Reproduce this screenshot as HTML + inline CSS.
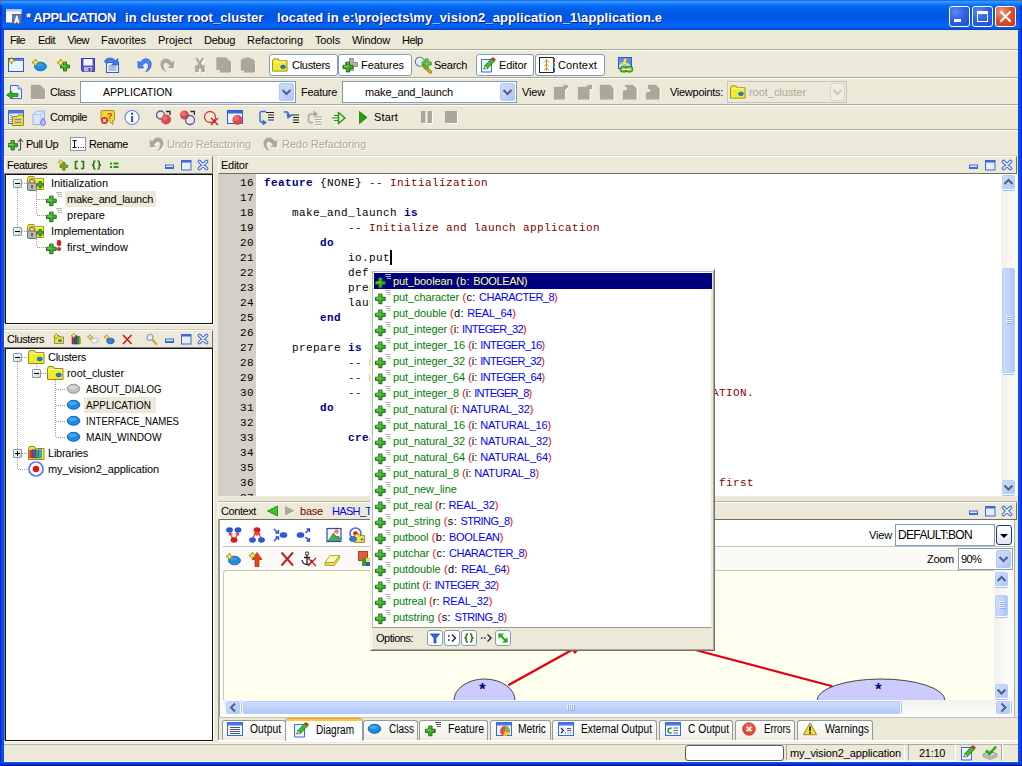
<!DOCTYPE html>
<html><head><meta charset="utf-8"><title>APPLICATION</title>
<style>
html,body{margin:0;padding:0}
body{width:1022px;height:766px;position:relative;overflow:hidden;background:#ece9d8;font-family:"Liberation Sans",sans-serif;font-size:11px;line-height:13px;color:#000}
div,span.t,svg.i{position:absolute;box-sizing:border-box}
span.t{white-space:pre}
.g{color:#aca899}
.mono{font-family:"Liberation Mono",monospace;font-size:11px;letter-spacing:0.4px;line-height:15px;white-space:pre;position:absolute}
.kw{color:#00007f;font-weight:bold}
.cm{color:#7f0000}
.hl{background:#aca899}
.hw{background:#fff}
.btn{border:1px solid #7f9db9;border-radius:3px;background:#fff}
.combo{border:1px solid #7f9db9;background:#fff}
.arrow{border:1px solid #b4c8f6;border-radius:2px;background:linear-gradient(135deg,#cbdafc 0%,#c2d3fc 50%,#adc3f8 100%)}
.tree{border:1px solid #101010;background:#fff;box-shadow:-1px -1px 0 #808080,1px 1px 0 #fff}
.sel{background:#ece9d8}
.tab{border:1px solid #919b9c;border-bottom:none;border-radius:3px 3px 0 0;background:linear-gradient(#fff,#f6f5f0 60%,#eeece2)}
.sb{background:#f3f1ec}
</style></head>
<body>
<div style="left:0px;top:0px;width:1022px;height:8px;background:#4b6dc5"></div>
<div style="left:0px;top:0px;width:1022px;height:30px;background:linear-gradient(to bottom,#0a5fe0 0%,#3a94ff 5%,#2a8cff 9%,#0f78fb 14%,#0468f2 22%,#035ee8 32%,#0259e4 45%,#0257e6 58%,#035cf0 70%,#0464f8 80%,#0566fb 86%,#0360ee 92%,#024fd0 97%,#0140b0 100%);border-radius:6px 6px 0 0"></div>
<div style="left:0px;top:30px;width:4px;height:736px;background:linear-gradient(to right,#0019cf 0,#0a35e0 25%,#0c50ee 50%,#0855e8 75%,#0349d8 100%)"></div>
<div style="left:1018px;top:30px;width:4px;height:736px;background:linear-gradient(to right,#0349d8 0,#0855e8 25%,#0c50ee 50%,#0a35e0 75%,#0019cf 100%)"></div>
<div style="left:0px;top:762px;width:1022px;height:4px;background:linear-gradient(to bottom,#0a5ae8 0,#0a48e0 30%,#0830c8 60%,#001ea0 85%,#00138c 100%)"></div>
<div style="left:0px;top:5px;width:3px;height:25px;background:linear-gradient(to right,#0a25c0,rgba(10,50,210,0))"></div>
<div style="left:1019px;top:5px;width:3px;height:25px;background:linear-gradient(to left,#0a25c0,rgba(10,50,210,0))"></div>
<svg class="i" style="left:6px;top:9px;" width="16" height="16" viewBox="0 0 16 16"><rect x="0" y="0" width="15.500" height="13.500" fill="#fdfdff"/><rect x="0" y="0" width="15.500" height="2.500" fill="#b8c4f6"/><rect x="6.700" y="5.600" width="8.800" height="9" fill="#4a7ae8" stroke="#6a5a3a" stroke-width="1"/><path d="M8 14.200L10.300 6.500H11.300L13.300 14.200L11.800 14.200L10.800 12L9.500 14.200Z" fill="#fff"/></svg>
<span class="t" style="left:26px;top:9.5px;font-size:13px;line-height:15px;color:#fff;font-weight:bold;letter-spacing:-0.411px;text-shadow:1px 1px 0 #0a1883;">* APPLICATION</span>
<span class="t" style="left:125px;top:9.5px;font-size:13px;line-height:15px;color:#fff;font-weight:bold;letter-spacing:0.086px;text-shadow:1px 1px 0 #0a1883;">in cluster root_cluster</span>
<span class="t" style="left:277px;top:9.5px;font-size:13px;line-height:15px;color:#fff;font-weight:bold;letter-spacing:0.118px;text-shadow:1px 1px 0 #0a1883;">located in e:\projects\my_vision2_application_1\application.e</span>
<div style="left:949px;top:6px;width:21px;height:21px;border:1px solid #fff;border-radius:3px;background:radial-gradient(circle at 30% 25%,#5f8df0 0,#2f62e4 45%,#1f4fd2 100%)"><div style="left:4px;top:12px;width:7px;height:3px;background:#fff"></div></div>
<div style="left:972px;top:6px;width:21px;height:21px;border:1px solid #fff;border-radius:3px;background:radial-gradient(circle at 30% 25%,#5f8df0 0,#2f62e4 45%,#1f4fd2 100%)"><div style="left:4px;top:4px;width:11px;height:11px;border:1px solid #fff;border-top:3px solid #fff"></div></div>
<div style="left:995px;top:6px;width:21px;height:21px;border:1px solid #fff;border-radius:3px;background:radial-gradient(circle at 30% 25%,#f0a080 0,#e0502c 45%,#c83818 100%)"><svg class="i" style="left:0;top:0" width="19" height="19" viewBox="0 0 19 19"><path d="M5 5l9 9M14 5l-9 9" stroke="#fff" stroke-width="2.2" stroke-linecap="round"/></svg></div>
<span class="t" style="left:10px;top:34px;letter-spacing:-0.681px;">File</span>
<span class="t" style="left:38px;top:34px;letter-spacing:-0.489px;">Edit</span>
<span class="t" style="left:67.5px;top:34px;letter-spacing:-0.536px;">View</span>
<span class="t" style="left:101px;top:34px;letter-spacing:-0.026px;">Favorites</span>
<span class="t" style="left:158px;top:34px;letter-spacing:-0.033px;">Project</span>
<span class="t" style="left:204px;top:34px;letter-spacing:-0.283px;">Debug</span>
<span class="t" style="left:247px;top:34px;letter-spacing:-0.023px;">Refactoring</span>
<span class="t" style="left:315px;top:34px;letter-spacing:-0.136px;">Tools</span>
<span class="t" style="left:352px;top:34px;letter-spacing:-0.187px;">Window</span>
<span class="t" style="left:402px;top:34px;letter-spacing:-0.530px;">Help</span>
<div class="hl" style="left:4px;top:49px;width:1014px;height:1px;"></div>
<div class="hw" style="left:4px;top:50px;width:1014px;height:1px;"></div>
<div class="hl" style="left:4px;top:77px;width:1014px;height:1px;"></div>
<div class="hw" style="left:4px;top:78px;width:1014px;height:1px;"></div>
<div class="hl" style="left:4px;top:104px;width:1014px;height:1px;"></div>
<div class="hw" style="left:4px;top:105px;width:1014px;height:1px;"></div>
<div class="hl" style="left:4px;top:129px;width:1014px;height:1px;"></div>
<div class="hw" style="left:4px;top:130px;width:1014px;height:1px;"></div>
<div style="left:4px;top:155px;width:1014px;height:1px;background:#dcd9c9"></div>
<svg class="i" style="left:8px;top:57px;" width="16" height="16" viewBox="0 0 16 16"><rect x="0.5" y="1.5" width="15" height="13" fill="#eef1ff" stroke="#2a5bd8"/><rect x="1" y="2" width="14" height="2" fill="#5b84e8"/><path transform="translate(0 0) scale(1.17)" d="M3 0L4 2L6 3L4 4L3 6L2 4L0 3L2 2Z" fill="#fff05a" stroke="#8a7a10" stroke-width="0.7"/></svg>
<svg class="i" style="left:32px;top:57px;" width="16" height="16" viewBox="0 0 16 16"><ellipse cx="8.500" cy="9.500" rx="6" ry="4.300" fill="#1c8be0" stroke="#0b5fae" stroke-width="0.8"/><ellipse cx="7.500" cy="8" rx="3.500" ry="1.600" fill="#4aa6ee" opacity="0.7"/><path transform="translate(0 2) scale(1.17)" d="M3 0L4 2L6 3L4 4L3 6L2 4L0 3L2 2Z" fill="#fff05a" stroke="#8a7a10" stroke-width="0.7"/></svg>
<svg class="i" style="left:56px;top:57px;" width="16" height="16" viewBox="0 0 16 16"><path transform="translate(4.5 5) scale(1)" d="M3 0H6V3H9V6H6V9H3V6H0V3H3Z" fill="#3fae2a" stroke="#1d6b12" stroke-width="0.9" stroke-linejoin="round"/><path transform="translate(4.5 5) scale(1)" d="M3.800 0.800H5.200M0.800 3.800H5" stroke="#8fe070" stroke-width="0.8" fill="none"/><path transform="translate(1 2) scale(1.17)" d="M3 0L4 2L6 3L4 4L3 6L2 4L0 3L2 2Z" fill="#fff05a" stroke="#8a7a10" stroke-width="0.7"/></svg>
<svg class="i" style="left:80px;top:57px;" width="16" height="16" viewBox="0 0 16 16"><path d="M1.500 1.500H14.500V14.500H2.500L1.500 13.500Z" fill="#5a55d8" stroke="#3a35b0"/><rect x="3.500" y="2" width="9" height="6.500" fill="#f4f4ff"/><rect x="4" y="10" width="8" height="4.500" fill="#b8b8c8"/><rect x="8.500" y="11" width="2" height="3" fill="#4a45c0"/></svg>
<svg class="i" style="left:104px;top:57px;" width="16" height="16" viewBox="0 0 16 16"><rect x="2.500" y="5.500" width="12" height="10" fill="#f4f6ff" stroke="#2a5bd8"/><path d="M4.500 9H12.500M4.500 11H12.500M4.500 13H12.500" stroke="#7080a8" stroke-width="1"/><path d="M0.500 5C1 0.500 8 -0.500 11.500 3.500L14 1.500L14 8L7.500 8L9.500 6C7 3.500 4 4 3.500 6.500Z" fill="#3f7ae6" stroke="#2a5bd8" stroke-width="0.6"/></svg>
<svg class="i" style="left:136px;top:57px;" width="16" height="16" viewBox="0 0 16 16"><path d="M1.900 4.400L2.300 11.100L7.700 10.700L6 8.800C7.500 6.500 9.500 5.200 11 5.800C12.500 6.400 12.800 8.500 12.200 10.500C11.800 12 11 13.200 9.800 14.600C12.500 13.800 14.500 11.800 15.100 8.500C15.600 5 14 2.300 11 1.900C8.500 1.600 6 2.800 4.400 5.600Z" fill="#4a86f0" stroke="#2a5bd8" stroke-width="0.8" stroke-linejoin="round"/></svg>
<svg class="i" style="left:160px;top:57px;" width="16" height="16" viewBox="0 0 16 16"><g transform="translate(1 1)" fill="#fff" stroke="#fff"><path transform="translate(16 0) scale(-1 1)" d="M1.900 4.400L2.300 11.100L7.700 10.700L6 8.800C7.500 6.500 9.500 5.200 11 5.800C12.500 6.400 12.800 8.500 12.200 10.500C11.800 12 11 13.200 9.800 14.600C12.500 13.800 14.500 11.800 15.100 8.500C15.600 5 14 2.300 11 1.900C8.500 1.600 6 2.800 4.400 5.600Z" stroke-width="0.6"/></g><g fill="#aca899" stroke="#aca899"><path transform="translate(16 0) scale(-1 1)" d="M1.900 4.400L2.300 11.100L7.700 10.700L6 8.800C7.500 6.500 9.500 5.200 11 5.800C12.500 6.400 12.800 8.500 12.200 10.500C11.800 12 11 13.200 9.800 14.600C12.500 13.800 14.500 11.800 15.100 8.500C15.600 5 14 2.300 11 1.900C8.500 1.600 6 2.800 4.400 5.600Z" stroke-width="0.6"/></g></svg>
<svg class="i" style="left:192px;top:57px;" width="16" height="16" viewBox="0 0 16 16"><g transform="translate(1 1)" fill="#fff" stroke="#fff"><path d="M3.500 1L5.500 1L7.800 4.500L10 1L12 1L9 6.500L10.500 8.500L12.800 8.500V15H9.300V11.500H6.800V15H3.200V8.500L5.500 8.500L6.500 6.500Z" stroke-width="0.3"/></g><g fill="#aca899" stroke="#aca899"><path d="M3.500 1L5.500 1L7.800 4.500L10 1L12 1L9 6.500L10.500 8.500L12.800 8.500V15H9.300V11.500H6.800V15H3.200V8.500L5.500 8.500L6.500 6.500Z" stroke-width="0.3"/></g></svg>
<svg class="i" style="left:216px;top:57px;" width="16" height="16" viewBox="0 0 16 16"><g transform="translate(1 1)" fill="#fff" stroke="#fff"><path d="M0.500 0.500H10L15 5V15.500H4V13H0.500Z" stroke-width="0.3"/></g><g fill="#aca899" stroke="#aca899"><path d="M0.500 0.500H10L15 5V15.500H4V13H0.500Z" stroke-width="0.3"/></g></svg>
<svg class="i" style="left:240px;top:57px;" width="16" height="16" viewBox="0 0 16 16"><g transform="translate(1 1)" fill="#fff" stroke="#fff"><path d="M1 4C1 2 3 1.500 5 1.500C5.500 0 9.500 0 10 1.500C12.500 1.500 15 3 15 6V15.500H4V13.500H1Z" stroke-width="0.3"/></g><g fill="#aca899" stroke="#aca899"><path d="M1 4C1 2 3 1.500 5 1.500C5.500 0 9.500 0 10 1.500C12.500 1.500 15 3 15 6V15.500H4V13.500H1Z" stroke-width="0.3"/></g></svg>
<div class="btn" style="left:269px;top:54px;width:69px;height:22px;"></div>
<svg class="i" style="left:272px;top:57px;" width="16" height="16" viewBox="0 0 17 16"><path d="M0.500 3.500L1.500 1.500H6.500L7.500 3.500H16V14.500H0.500Z" fill="#f2ea30" stroke="#9a8c10" stroke-width="1"/><path d="M1.500 4.500H15" stroke="#fffaa0" stroke-width="1"/><ellipse cx="11.700" cy="10" rx="2.600" ry="1.900" fill="#1c7fe0" stroke="#0b4fae" stroke-width="0.6"/></svg>
<span class="t" style="left:292px;top:59px;letter-spacing:-0.293px;">Clusters</span>
<div class="btn" style="left:338px;top:54px;width:74px;height:22px;"></div>
<svg class="i" style="left:342px;top:57px;" width="16" height="16" viewBox="0 0 16 16"><path d="M6 1.500H10V5.500H14V9.500H10V13.500H6V9.500H2V5.500H6Z" transform="translate(1.5 0)" fill="#b0b0b0" stroke="#808080" stroke-width="0.8"/><path transform="translate(1 5) scale(1.1)" d="M3 0H6V3H9V6H6V9H3V6H0V3H3Z" fill="#3fae2a" stroke="#1d6b12" stroke-width="0.9" stroke-linejoin="round"/><path transform="translate(1 5) scale(1.1)" d="M3.800 0.800H5.200M0.800 3.800H5" stroke="#8fe070" stroke-width="0.8" fill="none"/></svg>
<span class="t" style="left:361px;top:59px;letter-spacing:-0.051px;">Features</span>
<svg class="i" style="left:414px;top:56px;" width="18" height="18" viewBox="0 0 18 18"><path d="M10 10.500L16.500 16" stroke="#8a7a08" stroke-width="3.200" stroke-linecap="round"/><path d="M10 10.500L16.500 16" stroke="#d0c030" stroke-width="1.600" stroke-linecap="round"/><circle cx="5.800" cy="5.800" r="4.500" fill="#dcecff" stroke="#707880" stroke-width="1.100"/><path d="M3 5A3 3 0 0 1 6 2.500" fill="none" stroke="#fff" stroke-width="1"/><path transform="translate(8.200 3)" d="M3 0H6V3H9V6H6V9H3V6H0V3H3Z" fill="#6cc840" stroke="#3a8a20" stroke-width="0.9" stroke-linejoin="round"/></svg>
<span class="t" style="left:434px;top:59px;letter-spacing:-0.309px;">Search</span>
<div class="btn" style="left:476px;top:54px;width:58px;height:22px;"></div>
<svg class="i" style="left:480px;top:57px;" width="16" height="16" viewBox="0 0 16 16"><path d="M1.500 2.500H11.500V15H1.500Z" fill="#f0f4ff" stroke="#3a6ad8"/><path d="M3 11.500H8" stroke="#3a6ad8" stroke-width="1"/><path d="M5 12L4.500 9L11.500 1.500L14.500 4L7.500 11.500Z" fill="#3fba30" stroke="#1a7a14" stroke-width="0.8"/><path d="M11.500 1.500L13 0.500L15.500 2.500L14.500 4Z" fill="#e83a20" stroke="#a01a10" stroke-width="0.6"/><path d="M5 12L4.500 9L7.500 11.500Z" fill="#f0d890"/></svg>
<span class="t" style="left:499px;top:59px;letter-spacing:-0.122px;">Editor</span>
<div class="btn" style="left:535px;top:54px;width:70px;height:22px;"></div>
<svg class="i" style="left:539px;top:57px;" width="16" height="16" viewBox="0 0 16 16"><rect x="0.500" y="0.500" width="14" height="15" fill="#fff" stroke="#222"/><path d="M7.500 2V14M5 5.500L7.500 3L10 5.500M5 9.500L7.500 7L10 9.500M5 13L7.500 11L10 13" stroke="#b89a20" stroke-width="1" fill="none"/><rect x="14" y="1" width="2" height="4" fill="#e02020"/><rect x="14" y="6" width="2" height="4" fill="#20a020"/><rect x="14" y="11" width="2" height="4" fill="#2040e0"/></svg>
<span class="t" style="left:558px;top:59px;letter-spacing:0.156px;">Context</span>
<svg class="i" style="left:617px;top:57px;" width="16" height="16" viewBox="0 0 16 16"><rect x="1.500" y="0.500" width="13" height="11" fill="#5a90e8" stroke="#2a5bd8"/><path d="M2 8L5 5L8 8L11 6L14 9V11H2Z" fill="#c8dcff"/><path d="M7.500 1.500L5 7H7.500L6 11.500L11 5.500H8.500L10 1.500Z" fill="#fff05a" stroke="#a89010" stroke-width="0.5"/><rect x="3" y="9.500" width="7.500" height="5.500" rx="2.700" fill="#7ac83a" stroke="#2a7a14"/><rect x="8.500" y="9.500" width="7.500" height="5.500" rx="2.700" fill="#7ac83a" stroke="#2a7a14"/><rect x="5.500" y="11.700" width="8" height="1.200" fill="#f4fff0"/></svg>
<svg class="i" style="left:6px;top:84px;" width="16" height="16" viewBox="0 0 16 16"><path d="M4.500 1.500H12L15.500 5V14.500H4.500Z" fill="#eef2ff" stroke="#3a6ad8"/><path d="M12 1.500V5H15.500" fill="#c8d8ff" stroke="#3a6ad8" stroke-width="0.8"/><path d="M0.500 11L6 7.500V9.500H12V12.500H6V14.500Z" fill="#2fb020" stroke="#1a7a14" stroke-width="0.8"/></svg>
<svg class="i" style="left:30px;top:84px;" width="16" height="16" viewBox="0 0 16 16"><g transform="translate(1 1)" fill="#fff" stroke="#fff"><path d="M1 1H10L15 5.500V15H1Z" stroke-width="0.3"/></g><g fill="#aca899" stroke="#aca899"><path d="M1 1H10L15 5.500V15H1Z" stroke-width="0.3"/></g></svg>
<span class="t" style="left:50px;top:86px;letter-spacing:-0.501px;">Class</span>
<div class="combo" style="left:80px;top:81px;width:216px;height:22px;"></div>
<span class="t" style="left:103px;top:86px;transform:scaleX(0.9593);transform-origin:0 0;">APPLICATION</span>
<div class="arrow" style="left:279px;top:83px;width:15px;height:18px;"></div>
<svg class="i" style="left:278px;top:84px;" width="16" height="16" viewBox="0 0 16 16"><path d="M4.500 6L8.500 10L12.500 6" fill="none" stroke="#4d6185" stroke-width="2"/></svg>
<span class="t" style="left:301px;top:86px;letter-spacing:-0.272px;">Feature</span>
<div class="combo" style="left:342px;top:81px;width:175px;height:22px;"></div>
<span class="t" style="left:365px;top:86px;letter-spacing:-0.126px;">make_and_launch</span>
<div class="arrow" style="left:500px;top:83px;width:15px;height:18px;"></div>
<svg class="i" style="left:499px;top:84px;" width="16" height="16" viewBox="0 0 16 16"><path d="M4.500 6L8.500 10L12.500 6" fill="none" stroke="#4d6185" stroke-width="2"/></svg>
<span class="t" style="left:522px;top:86px;letter-spacing:-0.161px;">View</span>
<svg class="i" style="left:553px;top:84px;" width="16" height="16" viewBox="0 0 16 16"><g transform="translate(1 1)" fill="#fff" stroke="#fff"><path d="M1 3H9L13 0.500L15.500 2.500L12 6V15.500H1Z" stroke-width="0.3"/></g><g fill="#aca899" stroke="#aca899"><path d="M1 3H9L13 0.500L15.500 2.500L12 6V15.500H1Z" stroke-width="0.3"/></g></svg>
<svg class="i" style="left:577px;top:84px;" width="16" height="16" viewBox="0 0 16 16"><g transform="translate(1 1)" fill="#fff" stroke="#fff"><path d="M1 3H9L11 1H15V5H12.500V15.500H1Z" stroke-width="0.3"/></g><g fill="#aca899" stroke="#aca899"><path d="M1 3H9L11 1H15V5H12.500V15.500H1Z" stroke-width="0.3"/></g></svg>
<svg class="i" style="left:599px;top:84px;" width="16" height="16" viewBox="0 0 16 16"><g transform="translate(1 1)" fill="#fff" stroke="#fff"><path d="M1 1H11L14.500 4.500V15.500H1Z" stroke-width="0.3"/></g><g fill="#aca899" stroke="#aca899"><path d="M1 1H11L14.500 4.500V15.500H1Z" stroke-width="0.3"/></g></svg>
<svg class="i" style="left:622px;top:84px;" width="16" height="16" viewBox="0 0 16 16"><g transform="translate(1 1)" fill="#fff" stroke="#fff"><path d="M3 1H11L14.500 4.500V15.500H1V7L3 6Z" stroke-width="0.3"/><rect x="2" y="3" width="3" height="3" fill="#ece9d8" stroke="none"/></g><g fill="#aca899" stroke="#aca899"><path d="M3 1H11L14.500 4.500V15.500H1V7L3 6Z" stroke-width="0.3"/><rect x="2" y="3" width="3" height="3" fill="#ece9d8" stroke="none"/></g></svg>
<svg class="i" style="left:645px;top:84px;" width="16" height="16" viewBox="0 0 16 16"><g transform="translate(1 1)" fill="#fff" stroke="#fff"><path d="M3 1H11L14.500 4.500V15.500H1V9L3 8Z" stroke-width="0.3"/><rect x="2" y="5" width="3" height="3" fill="#ece9d8" stroke="none"/></g><g fill="#aca899" stroke="#aca899"><path d="M3 1H11L14.500 4.500V15.500H1V9L3 8Z" stroke-width="0.3"/><rect x="2" y="5" width="3" height="3" fill="#ece9d8" stroke="none"/></g></svg>
<span class="t" style="left:670px;top:86px;letter-spacing:-0.277px;">Viewpoints:</span>
<div style="left:727px;top:81px;width:120px;height:22px;border:1px solid #c9c7ba;background:#ece9d8"></div>
<svg class="i" style="left:730px;top:84px;" width="16" height="16" viewBox="0 0 17 16"><path d="M0.500 3.500L1.500 1.500H6.500L7.500 3.500H16V14.500H0.500Z" fill="#f2ea30" stroke="#9a8c10" stroke-width="1"/><path d="M1.500 4.500H15" stroke="#fffaa0" stroke-width="1"/><ellipse cx="11.700" cy="10" rx="2.600" ry="1.900" fill="#1c7fe0" stroke="#0b4fae" stroke-width="0.6"/></svg>
<span class="t" style="left:749px;top:86px;color:#aca899;letter-spacing:-0.039px;">root_cluster</span>
<div style="left:830px;top:83px;width:15px;height:18px;border:1px solid #d8d5c6;border-radius:2px;background:#efeee5"></div>
<svg class="i" style="left:829px;top:84px;" width="16" height="16" viewBox="0 0 16 16"><path d="M4.500 6L8.500 10L12.500 6" fill="none" stroke="#c9c7ba" stroke-width="2"/></svg>
<svg class="i" style="left:8px;top:110px;" width="16" height="16" viewBox="0 0 16 16"><rect x="0.500" y="0.500" width="15" height="13" fill="#e8eeff" stroke="#3a6ad8"/><rect x="1" y="1" width="14" height="2.500" fill="#4a78e0"/><path d="M2.500 5.500H3.500M2.500 7.500H3.500M2.500 9.500H3.500M2.500 11.500H3.500" stroke="#556" stroke-width="1"/><path d="M4.500 15.500V6.500H9L10 5H14L15.500 7V15.500Z" fill="#efe04a" stroke="#9a8a10"/><path d="M6.500 9.500H13.500M6.500 12.500H13.500" stroke="#7a8ab8" stroke-width="1.400"/></svg>
<svg class="i" style="left:32px;top:110px;" width="16" height="16" viewBox="0 0 16 16"><path d="M1 4.500L5 1H12.500V10L9 14.500H1Z" fill="#d8e6ff" stroke="#8ab0f0" stroke-width="0.9"/><path d="M1 4.500H9V14.500M9 4.500L12.500 1" fill="none" stroke="#a8c4f8" stroke-width="0.9"/><path d="M11 8C9 11 8.500 12 8.500 13A2.500 2.500 0 0 0 13.500 13C13.500 12 13 11 11 8Z" fill="#b8b8ff" stroke="#6a6ae0" stroke-width="0.8"/></svg>
<span class="t" style="left:50px;top:111px;letter-spacing:-0.478px;">Compile</span>
<svg class="i" style="left:100px;top:110px;" width="16" height="16" viewBox="0 0 16 16"><path d="M2.500 0.500H13A1.500 1.500 0 0 1 14.500 2V9A1.500 1.500 0 0 1 13 10.500H12.500L13 14.500L8.500 10.500H2.500A1.500 1.500 0 0 1 1 9V2A1.500 1.500 0 0 1 2.500 0.500Z" fill="#f4d83a" stroke="#a08a10" stroke-width="0.9"/><text x="7" y="9" font-family="Liberation Sans,sans-serif" font-weight="bold" font-size="9" fill="#d03020">?</text><circle cx="4.500" cy="10.500" r="3.200" fill="#e83828" stroke="#a01a10" stroke-width="0.6"/><path d="M3.200 9.200L5.800 11.800M5.800 9.200L3.200 11.800" stroke="#fff" stroke-width="1.200"/></svg>
<svg class="i" style="left:124px;top:110px;" width="16" height="16" viewBox="0 0 16 16"><circle cx="8" cy="7.500" r="7" fill="#fff" stroke="#6a8ad8" stroke-width="1.200"/><rect x="7" y="6" width="2.200" height="6" fill="#2a5bd8"/><circle cx="8.100" cy="3.800" r="1.300" fill="#2a5bd8"/></svg>
<svg class="i" style="left:155px;top:110px;" width="16" height="16" viewBox="0 0 16 16"><circle cx="5.5" cy="5" r="4" fill="none" stroke="#5a5aa8" stroke-width="1.300"/><circle cx="11" cy="9.5" r="5" fill="#d84a50"/><circle cx="9.75" cy="8.0" r="2.5" fill="#e87a80" opacity="0.8"/><path d="M11 1.500H15V5" fill="none" stroke="#223" stroke-width="1.300"/></svg>
<svg class="i" style="left:179px;top:110px;" width="16" height="16" viewBox="0 0 16 16"><circle cx="5.5" cy="5" r="4.5" fill="#d84a50"/><circle cx="4.375" cy="3.6500000000000004" r="2.25" fill="#e87a80" opacity="0.8"/><circle cx="11" cy="10" r="4.5" fill="none" stroke="#5a5aa8" stroke-width="1.300"/><path d="M11.500 1.500H15.500V5" fill="none" stroke="#223" stroke-width="1.300"/></svg>
<svg class="i" style="left:203px;top:110px;" width="16" height="16" viewBox="0 0 16 16"><circle cx="7" cy="7" r="5.500" fill="none" stroke="#d03a40" stroke-width="1.300"/><path d="M8 8L15 15M15 8L8 15" stroke="#c02028" stroke-width="1.400"/></svg>
<svg class="i" style="left:227px;top:110px;" width="16" height="16" viewBox="0 0 16 16"><rect x="0.500" y="0.500" width="15" height="13" fill="#eef1ff" stroke="#2a5bd8"/><rect x="1" y="1" width="14" height="2.500" fill="#3a6ad8"/><circle cx="10.5" cy="10" r="5" fill="#d84a50"/><circle cx="9.25" cy="8.5" r="2.5" fill="#e87a80" opacity="0.8"/></svg>
<svg class="i" style="left:259px;top:110px;" width="16" height="16" viewBox="0 0 16 16"><path d="M7 2.500H15M9 5H15M9 7.500H15M9 10H15" stroke="#222" stroke-width="1.100"/><path d="M7 1.500H2.500A1.500 1.500 0 0 0 1 3V10C1 12 2 12.500 4 12.500" fill="none" stroke="#3a6ad8" stroke-width="1.400"/><path d="M3.500 9.500L8 12.500L3.500 15.500Z" fill="#3a6ad8"/></svg>
<svg class="i" style="left:283px;top:110px;" width="16" height="16" viewBox="0 0 16 16"><path d="M8 5H16M10 7.500H16M10 10H16M10 12.500H16" stroke="#222" stroke-width="1.100"/><path d="M1 2.500C3 1 5 2 6 5" fill="none" stroke="#3a6ad8" stroke-width="1.600"/><path d="M3.500 3.500L9.500 5.500L4.500 9Z" fill="#3a6ad8"/></svg>
<svg class="i" style="left:307px;top:110px;" width="16" height="16" viewBox="0 0 16 16"><g transform="translate(1 1)"><path d="M8 7H15M8 9.500H15M8 12H15M8 14.500H15" stroke="#fff" stroke-width="1.100"/></g><path d="M8 7H15M8 9.500H15M8 12H15M8 14.500H15" stroke="#aca899" stroke-width="1.100"/><path d="M6 12.500H3A1.500 1.500 0 0 1 1.500 11V6C1.500 4.500 3 4 5 4H7" fill="none" stroke="#aca899" stroke-width="1.500"/><path d="M6.500 0.500L11 4L6.500 7.500Z" fill="#aca899"/></svg>
<svg class="i" style="left:331px;top:110px;" width="16" height="16" viewBox="0 0 16 16"><path d="M7.500 2.500L14 8L7.500 13.500Z" fill="#ece9d8" stroke="#1f9a14" stroke-width="1.500" stroke-linejoin="round"/><path d="M3 5.500H7M1 8H7M3 10.500H7" stroke="#1f9a14" stroke-width="1"/></svg>
<svg class="i" style="left:355px;top:110px;" width="16" height="16" viewBox="0 0 16 16"><path d="M4.500 1.500L12 7.500L4.500 13.500Z" fill="#1fa014" stroke="#147a0c" stroke-width="0.8" stroke-linejoin="round"/></svg>
<span class="t" style="left:374px;top:111px;letter-spacing:0.154px;">Start</span>
<svg class="i" style="left:418px;top:110px;" width="16" height="16" viewBox="0 0 16 16"><g transform="translate(1 1)" fill="#fff" stroke="#fff"><rect x="3" y="1" width="4.500" height="12" stroke="none"/><rect x="9.500" y="1" width="4.500" height="12" stroke="none"/></g><g fill="#aca899" stroke="#aca899"><rect x="3" y="1" width="4.500" height="12" stroke="none"/><rect x="9.500" y="1" width="4.500" height="12" stroke="none"/></g></svg>
<svg class="i" style="left:443px;top:110px;" width="16" height="16" viewBox="0 0 16 16"><g transform="translate(1 1)" fill="#fff" stroke="#fff"><rect x="2" y="1" width="12" height="12" stroke="none"/></g><g fill="#aca899" stroke="#aca899"><rect x="2" y="1" width="12" height="12" stroke="none"/></g></svg>
<svg class="i" style="left:8px;top:136px;" width="16" height="16" viewBox="0 0 16 16"><path transform="translate(0 4.5) scale(1.05)" d="M3 0H6V3H9V6H6V9H3V6H0V3H3Z" fill="#3fae2a" stroke="#1d6b12" stroke-width="0.9" stroke-linejoin="round"/><path transform="translate(0 4.5) scale(1.05)" d="M3.800 0.800H5.200M0.800 3.800H5" stroke="#8fe070" stroke-width="0.8" fill="none"/><path d="M12.500 14V3.500M10 6L12.500 3L15 6" fill="none" stroke="#4a5060" stroke-width="1.100"/><path d="M12.500 14H10" stroke="#4a5060" stroke-width="1.100"/></svg>
<span class="t" style="left:26px;top:138px;letter-spacing:-0.494px;">Pull Up</span>
<svg class="i" style="left:70px;top:136px;" width="16" height="16" viewBox="0 0 16 16"><rect x="0.500" y="1.500" width="15" height="13" fill="#fff" stroke="#7f9db9"/><path d="M2.500 4.500H6.500M2.500 11.500H6.500M4.500 4.500V11.500" stroke="#000" stroke-width="1"/><path d="M8 11.500H9M10.500 11.500H11.500M13 11.500H14" stroke="#000" stroke-width="1"/></svg>
<span class="t" style="left:89px;top:138px;letter-spacing:-0.429px;">Rename</span>
<svg class="i" style="left:148px;top:136px;" width="16" height="16" viewBox="0 0 16 16"><g transform="translate(1 1)" fill="#fff" stroke="#fff"><path d="M1.900 4.400L2.300 11.100L7.700 10.700L6 8.800C7.500 6.500 9.500 5.200 11 5.800C12.500 6.400 12.800 8.500 12.200 10.500C11.800 12 11 13.200 9.800 14.600C12.500 13.800 14.500 11.800 15.100 8.500C15.600 5 14 2.300 11 1.900C8.500 1.600 6 2.800 4.400 5.600Z" stroke-width="0.6"/></g><g fill="#aca899" stroke="#aca899"><path d="M1.900 4.400L2.300 11.100L7.700 10.700L6 8.800C7.500 6.500 9.500 5.200 11 5.800C12.500 6.400 12.800 8.500 12.200 10.500C11.800 12 11 13.200 9.800 14.600C12.500 13.800 14.500 11.800 15.100 8.500C15.600 5 14 2.300 11 1.900C8.500 1.600 6 2.800 4.400 5.600Z" stroke-width="0.6"/></g></svg>
<span class="t" style="left:167px;top:138px;color:#aca899;letter-spacing:-0.100px;text-shadow:1px 1px 0 #fff;">Undo Refactoring</span>
<svg class="i" style="left:263px;top:136px;" width="16" height="16" viewBox="0 0 16 16"><g transform="translate(1 1)" fill="#fff" stroke="#fff"><path transform="translate(16 0) scale(-1 1)" d="M1.900 4.400L2.300 11.100L7.700 10.700L6 8.800C7.500 6.500 9.500 5.200 11 5.800C12.500 6.400 12.800 8.500 12.200 10.500C11.800 12 11 13.200 9.800 14.600C12.500 13.800 14.500 11.800 15.100 8.500C15.600 5 14 2.300 11 1.900C8.500 1.600 6 2.800 4.400 5.600Z" stroke-width="0.6"/></g><g fill="#aca899" stroke="#aca899"><path transform="translate(16 0) scale(-1 1)" d="M1.900 4.400L2.300 11.100L7.700 10.700L6 8.800C7.500 6.500 9.500 5.200 11 5.800C12.500 6.400 12.800 8.500 12.200 10.500C11.800 12 11 13.200 9.800 14.600C12.500 13.800 14.500 11.800 15.100 8.500C15.600 5 14 2.300 11 1.900C8.500 1.600 6 2.800 4.400 5.600Z" stroke-width="0.6"/></g></svg>
<span class="t" style="left:282px;top:138px;color:#aca899;letter-spacing:-0.100px;text-shadow:1px 1px 0 #fff;">Redo Refactoring</span>
<div style="left:4px;top:156px;width:209px;height:18px;background:#ece9d8;border-top:1px solid #fff;border-left:1px solid #fff;border-right:1px solid #716f64;border-bottom:1px solid #716f64"></div>
<span class="t" style="left:7px;top:159px;letter-spacing:-0.426px;">Features</span>
<svg class="i" style="left:165px;top:159px;" width="16" height="16" viewBox="0 0 16 16"><rect x="0.500" y="6" width="8" height="3.500" fill="#dfe6fb" stroke="#3a6ad8"/><rect x="1" y="8" width="7" height="1.500" fill="#3a6ad8"/></svg>
<svg class="i" style="left:181px;top:159px;" width="16" height="16" viewBox="0 0 16 16"><rect x="0.500" y="1.500" width="9.500" height="9.500" fill="#e8ecfd" stroke="#3a6ad8"/><rect x="0.500" y="1.500" width="9.500" height="2" fill="#3a6ad8"/></svg>
<svg class="i" style="left:197px;top:159px;" width="16" height="16" viewBox="0 0 16 16"><path d="M2.500 2.500L9.500 9.500M9.500 2.500L2.500 9.500" stroke="#3a6ad8" stroke-width="3.600" stroke-linecap="round"/><path d="M2.500 2.500L9.500 9.500M9.500 2.500L2.500 9.500" stroke="#f4f6ff" stroke-width="1.600" stroke-linecap="round"/></svg>
<svg class="i" style="left:56px;top:158px;" width="16" height="16" viewBox="0 0 16 16"><path transform="translate(4 4.5) scale(0.85)" d="M3 0H6V3H9V6H6V9H3V6H0V3H3Z" fill="#7aa818" stroke="#4a7a08" stroke-width="0.8"/><path transform="translate(2 1.5) scale(0.9)" d="M3 0L4 2L6 3L4 4L3 6L2 4L0 3L2 2Z" fill="#fff05a" stroke="#8a7a10" stroke-width="0.7"/></svg>
<svg class="i" style="left:72px;top:158px;" width="16" height="16" viewBox="0 0 16 16"><path d="M6 3.500H3.500V10.500H6M9 3.500H11.500V10.500H9" fill="none" stroke="#2a7a14" stroke-width="1.600"/></svg>
<svg class="i" style="left:88px;top:158px;" width="16" height="16" viewBox="0 0 16 16"><path d="M7.500 3H7Q5.800 3 5.800 4.200V6L4.600 7L5.800 8V9.800Q5.800 11 7 11H7.500M9.500 3H10Q11.200 3 11.200 4.200V6L12.400 7L11.200 8V9.800Q11.200 11 10 11H9.500" fill="none" stroke="#2a7a14" stroke-width="1.600"/></svg>
<svg class="i" style="left:106px;top:158px;" width="16" height="16" viewBox="0 0 16 16"><path d="M4 5.500H6M4 9H6" stroke="#2a9a14" stroke-width="1.800"/><path d="M7.500 5.500H12.500M7.500 9H12.500" stroke="#2a9a14" stroke-width="1.800"/></svg>
<div class="tree" style="left:5px;top:174px;width:208px;height:150px;"></div>
<div style="left:17px;top:188px;width:1px;height:44px;background:repeating-linear-gradient(to bottom,#a0a090 0 1px,transparent 1px 2px)"></div>
<div style="left:22px;top:183px;width:5px;height:1px;background:repeating-linear-gradient(to right,#a0a090 0 1px,transparent 1px 2px)"></div>
<div style="left:22px;top:231px;width:5px;height:1px;background:repeating-linear-gradient(to right,#a0a090 0 1px,transparent 1px 2px)"></div>
<div style="left:36px;top:191px;width:1px;height:24px;background:repeating-linear-gradient(to bottom,#a0a090 0 1px,transparent 1px 2px)"></div>
<div style="left:37px;top:199px;width:9px;height:1px;background:repeating-linear-gradient(to right,#a0a090 0 1px,transparent 1px 2px)"></div>
<div style="left:37px;top:215px;width:9px;height:1px;background:repeating-linear-gradient(to right,#a0a090 0 1px,transparent 1px 2px)"></div>
<div style="left:36px;top:239px;width:1px;height:8px;background:repeating-linear-gradient(to bottom,#a0a090 0 1px,transparent 1px 2px)"></div>
<div style="left:37px;top:247px;width:9px;height:1px;background:repeating-linear-gradient(to right,#a0a090 0 1px,transparent 1px 2px)"></div>
<div style="left:13px;top:179px;width:9px;height:9px;border:1px solid #7b9ebd;border-radius:1px;background:linear-gradient(135deg,#fff,#d6d2c2)"><div style="left:1px;top:3px;width:5px;height:1px;background:#000"></div></div>
<svg class="i" style="left:27px;top:175px;" width="18" height="16" viewBox="0 0 18 16"><path d="M0.500 3.500L1.500 1.500H7L8 3.500H16.500V14.500H0.500Z" fill="#f4e23a" stroke="#a89a10" stroke-width="1"/><path d="M1.500 4.500H15.500" stroke="#fff9a0" stroke-width="1"/><path d="M2.500 8V6.500A2.500 2.500 0 0 1 7.500 6.500V8" fill="none" stroke="#808080" stroke-width="1.500"/><rect x="0.500" y="8" width="9" height="7.500" rx="1" fill="#b8b8b8" stroke="#707070"/><rect x="4.300" y="10" width="1.500" height="3.500" fill="#555"/><path transform="translate(10 6.500) scale(0.72)" d="M3 0H6V3H9V6H6V9H3V6H0V3H3Z" fill="#3fae2a" stroke="#1d6b12" stroke-width="1.100"/></svg>
<span class="t" style="left:51px;top:177px;letter-spacing:-0.034px;">Initialization</span>
<div class="sel" style="left:65px;top:191px;width:91px;height:16px;"></div>
<svg class="i" style="left:46px;top:191px;" width="16" height="16" viewBox="0 0 16 16"><path transform="translate(0.5 5) scale(1.08)" d="M3 0H6V3H9V6H6V9H3V6H0V3H3Z" fill="#3fae2a" stroke="#1d6b12" stroke-width="0.9" stroke-linejoin="round"/><path transform="translate(0.5 5) scale(1.08)" d="M3.800 0.800H5.200M0.800 3.800H5" stroke="#8fe070" stroke-width="0.8" fill="none"/><path d="M10 1.500H16M11 3.500H16M12 5.500H16" stroke="#b4b4b4" stroke-width="1"/></svg>
<span class="t" style="left:67px;top:193px;letter-spacing:-0.260px;">make_and_launch</span>
<svg class="i" style="left:46px;top:207px;" width="16" height="16" viewBox="0 0 16 16"><path transform="translate(0.5 5) scale(1.08)" d="M3 0H6V3H9V6H6V9H3V6H0V3H3Z" fill="#3fae2a" stroke="#1d6b12" stroke-width="0.9" stroke-linejoin="round"/><path transform="translate(0.5 5) scale(1.08)" d="M3.800 0.800H5.200M0.800 3.800H5" stroke="#8fe070" stroke-width="0.8" fill="none"/><path d="M10 1.500H16M11 3.500H16M12 5.500H16" stroke="#b4b4b4" stroke-width="1"/></svg>
<span class="t" style="left:67px;top:209px;letter-spacing:0.013px;">prepare</span>
<div style="left:13px;top:227px;width:9px;height:9px;border:1px solid #7b9ebd;border-radius:1px;background:linear-gradient(135deg,#fff,#d6d2c2)"><div style="left:1px;top:3px;width:5px;height:1px;background:#000"></div></div>
<svg class="i" style="left:27px;top:223px;" width="18" height="16" viewBox="0 0 18 16"><path d="M0.500 3.500L1.500 1.500H7L8 3.500H16.500V14.500H0.500Z" fill="#f4e23a" stroke="#a89a10" stroke-width="1"/><path d="M1.500 4.500H15.500" stroke="#fff9a0" stroke-width="1"/><path d="M2.500 8V6.500A2.500 2.500 0 0 1 7.500 6.500V8" fill="none" stroke="#808080" stroke-width="1.500"/><rect x="0.500" y="8" width="9" height="7.500" rx="1" fill="#b8b8b8" stroke="#707070"/><rect x="4.300" y="10" width="1.500" height="3.500" fill="#555"/><path transform="translate(10 6.500) scale(0.72)" d="M3 0H6V3H9V6H6V9H3V6H0V3H3Z" fill="#3fae2a" stroke="#1d6b12" stroke-width="1.100"/></svg>
<span class="t" style="left:51px;top:225px;letter-spacing:-0.157px;">Implementation</span>
<svg class="i" style="left:46px;top:239px;" width="16" height="16" viewBox="0 0 16 16"><path transform="translate(0.5 5) scale(1.08)" d="M3 0H6V3H9V6H6V9H3V6H0V3H3Z" fill="#3fae2a" stroke="#1d6b12" stroke-width="0.9" stroke-linejoin="round"/><path transform="translate(0.5 5) scale(1.08)" d="M3.800 0.800H5.200M0.800 3.800H5" stroke="#8fe070" stroke-width="0.8" fill="none"/><ellipse cx="13" cy="4" rx="2" ry="3" fill="#e02020" stroke="#901010" stroke-width="0.5"/><circle cx="13" cy="10" r="1.700" fill="#e02020" stroke="#901010" stroke-width="0.5"/></svg>
<span class="t" style="left:67px;top:241px;letter-spacing:0.040px;">first_window</span>
<div style="left:4px;top:329px;width:209px;height:1px;background:#cfccbc"></div>
<div style="left:4px;top:330px;width:209px;height:18px;background:#ece9d8;border-top:1px solid #fff;border-left:1px solid #fff;border-right:1px solid #716f64;border-bottom:1px solid #716f64"></div>
<span class="t" style="left:7px;top:333px;letter-spacing:-0.418px;">Clusters</span>
<svg class="i" style="left:165px;top:333px;" width="16" height="16" viewBox="0 0 16 16"><rect x="0.500" y="6" width="8" height="3.500" fill="#dfe6fb" stroke="#3a6ad8"/><rect x="1" y="8" width="7" height="1.500" fill="#3a6ad8"/></svg>
<svg class="i" style="left:181px;top:333px;" width="16" height="16" viewBox="0 0 16 16"><rect x="0.500" y="1.500" width="9.500" height="9.500" fill="#e8ecfd" stroke="#3a6ad8"/><rect x="0.500" y="1.500" width="9.500" height="2" fill="#3a6ad8"/></svg>
<svg class="i" style="left:197px;top:333px;" width="16" height="16" viewBox="0 0 16 16"><path d="M2.500 2.500L9.500 9.500M9.500 2.500L2.500 9.500" stroke="#3a6ad8" stroke-width="3.600" stroke-linecap="round"/><path d="M2.500 2.500L9.500 9.500M9.500 2.500L2.500 9.500" stroke="#f4f6ff" stroke-width="1.600" stroke-linecap="round"/></svg>
<svg class="i" style="left:52px;top:332px;" width="16" height="16" viewBox="0 0 16 16"><path d="M2.500 5L3.500 3.500H7L8 5H11.500V11.500H2.500Z" fill="#f4e23a" stroke="#9a8a10" stroke-width="0.9"/><ellipse cx="8" cy="8.500" rx="2" ry="1.500" fill="#3a7ae0"/><path transform="translate(1.5 1.5) scale(0.9)" d="M3 0L4 2L6 3L4 4L3 6L2 4L0 3L2 2Z" fill="#fff05a" stroke="#8a7a10" stroke-width="0.7"/></svg>
<svg class="i" style="left:69px;top:332px;" width="16" height="16" viewBox="0 0 16 16"><rect x="3" y="4.500" width="2.500" height="7.500" fill="#e02020" stroke="#901010" stroke-width="0.5"/><rect x="5.500" y="3.500" width="2.500" height="8.500" fill="#3a4ae0" stroke="#202a90" stroke-width="0.5"/><rect x="8" y="4.500" width="2.500" height="7.500" fill="#20a020" stroke="#106010" stroke-width="0.500"/><path d="M10.500 5L12 5.500V12H10.500Z" fill="#e8a020"/><path transform="translate(2 1) scale(0.9)" d="M3 0L4 2L6 3L4 4L3 6L2 4L0 3L2 2Z" fill="#fff05a" stroke="#8a7a10" stroke-width="0.7"/></svg>
<svg class="i" style="left:86px;top:332px;" width="16" height="16" viewBox="0 0 16 16"><ellipse cx="8.500" cy="8.500" rx="3.600" ry="2.400" fill="#f4f4f4" stroke="#a0a0a0" stroke-width="0.7"/><path transform="translate(1.5 2.5) scale(0.9)" d="M3 0L4 2L6 3L4 4L3 6L2 4L0 3L2 2Z" fill="#fff05a" stroke="#8a7a10" stroke-width="0.7"/></svg>
<svg class="i" style="left:102px;top:332px;" width="16" height="16" viewBox="0 0 16 16"><ellipse cx="8.500" cy="9" rx="3.800" ry="2.800" fill="#3a7ae0" stroke="#1a4aa8" stroke-width="0.7"/><path transform="translate(2 2.5) scale(0.9)" d="M3 0L4 2L6 3L4 4L3 6L2 4L0 3L2 2Z" fill="#fff05a" stroke="#8a7a10" stroke-width="0.7"/></svg>
<svg class="i" style="left:119px;top:332px;" width="16" height="16" viewBox="0 0 16 16"><path d="M4 3L12.500 12M12.500 3L4 12" stroke="#d02020" stroke-width="1.700"/></svg>
<svg class="i" style="left:144px;top:332px;" width="16" height="16" viewBox="0 0 16 16"><circle cx="6" cy="5.500" r="3" fill="#e4f0ff" stroke="#8a9ab8" stroke-width="1.100"/><path d="M8.500 8L12.500 12" stroke="#c8b020" stroke-width="2.200" stroke-linecap="round"/></svg>
<div class="tree" style="left:5px;top:348px;width:208px;height:393px;"></div>
<div style="left:17px;top:362px;width:1px;height:108px;background:repeating-linear-gradient(to bottom,#a0a090 0 1px,transparent 1px 2px)"></div>
<div style="left:22px;top:357px;width:5px;height:1px;background:repeating-linear-gradient(to right,#a0a090 0 1px,transparent 1px 2px)"></div>
<div style="left:22px;top:453px;width:5px;height:1px;background:repeating-linear-gradient(to right,#a0a090 0 1px,transparent 1px 2px)"></div>
<div style="left:18px;top:469px;width:9px;height:1px;background:repeating-linear-gradient(to right,#a0a090 0 1px,transparent 1px 2px)"></div>
<div style="left:36px;top:362px;width:1px;height:6px;background:repeating-linear-gradient(to bottom,#a0a090 0 1px,transparent 1px 2px)"></div>
<div style="left:41px;top:373px;width:5px;height:1px;background:repeating-linear-gradient(to right,#a0a090 0 1px,transparent 1px 2px)"></div>
<div style="left:55px;top:378px;width:1px;height:59px;background:repeating-linear-gradient(to bottom,#a0a090 0 1px,transparent 1px 2px)"></div>
<div style="left:56px;top:389px;width:9px;height:1px;background:repeating-linear-gradient(to right,#a0a090 0 1px,transparent 1px 2px)"></div>
<div style="left:56px;top:405px;width:9px;height:1px;background:repeating-linear-gradient(to right,#a0a090 0 1px,transparent 1px 2px)"></div>
<div style="left:56px;top:421px;width:9px;height:1px;background:repeating-linear-gradient(to right,#a0a090 0 1px,transparent 1px 2px)"></div>
<div style="left:56px;top:437px;width:9px;height:1px;background:repeating-linear-gradient(to right,#a0a090 0 1px,transparent 1px 2px)"></div>
<div style="left:13px;top:353px;width:9px;height:9px;border:1px solid #7b9ebd;border-radius:1px;background:linear-gradient(135deg,#fff,#d6d2c2)"><div style="left:1px;top:3px;width:5px;height:1px;background:#000"></div></div>
<svg class="i" style="left:28px;top:349px;" width="17" height="16" viewBox="0 0 17 16"><path d="M0.500 3.500L1.500 1.500H6.500L7.500 3.500H16V14.500H0.500Z" fill="#f2ea30" stroke="#9a8c10" stroke-width="1"/><path d="M1.500 4.500H15" stroke="#fffaa0" stroke-width="1"/><ellipse cx="11.700" cy="10" rx="2.600" ry="1.900" fill="#1c7fe0" stroke="#0b4fae" stroke-width="0.6"/></svg>
<span class="t" style="left:48px;top:351px;letter-spacing:-0.293px;">Clusters</span>
<div style="left:32px;top:369px;width:9px;height:9px;border:1px solid #7b9ebd;border-radius:1px;background:linear-gradient(135deg,#fff,#d6d2c2)"><div style="left:1px;top:3px;width:5px;height:1px;background:#000"></div></div>
<svg class="i" style="left:47px;top:365px;" width="17" height="16" viewBox="0 0 17 16"><path d="M0.500 3.500L1.500 1.500H6.500L7.500 3.500H16V14.500H0.500Z" fill="#f2ea30" stroke="#9a8c10" stroke-width="1"/><path d="M1.500 4.500H15" stroke="#fffaa0" stroke-width="1"/><ellipse cx="11.700" cy="10" rx="2.600" ry="1.900" fill="#1c7fe0" stroke="#0b4fae" stroke-width="0.6"/></svg>
<span class="t" style="left:67px;top:367px;letter-spacing:-0.039px;">root_cluster</span>
<svg class="i" style="left:65px;top:381px;" width="16" height="16" viewBox="0 0 16 16"><ellipse cx="8.500" cy="7.800" rx="6.300" ry="4.500" fill="#c4c4c4" stroke="#8a8a8a" stroke-width="0.9"/><ellipse cx="7.500" cy="6.300" rx="4" ry="1.800" fill="#dedede" opacity="0.75"/></svg>
<span class="t" style="left:86px;top:383px;transform:scaleX(0.8822);transform-origin:0 0;">ABOUT_DIALOG</span>
<div class="sel" style="left:84px;top:397px;width:72px;height:16px;"></div>
<svg class="i" style="left:65px;top:397px;" width="16" height="16" viewBox="0 0 16 16"><ellipse cx="8.500" cy="7.800" rx="6.300" ry="4.500" fill="#1c8be0" stroke="#0b5fae" stroke-width="0.9"/><ellipse cx="7.500" cy="6.300" rx="4" ry="1.800" fill="#5ab0f4" opacity="0.75"/></svg>
<span class="t" style="left:86px;top:399px;transform:scaleX(0.9037);transform-origin:0 0;">APPLICATION</span>
<svg class="i" style="left:65px;top:413px;" width="16" height="16" viewBox="0 0 16 16"><ellipse cx="8.500" cy="7.800" rx="6.300" ry="4.500" fill="#1c8be0" stroke="#0b5fae" stroke-width="0.9"/><ellipse cx="7.500" cy="6.300" rx="4" ry="1.800" fill="#5ab0f4" opacity="0.75"/></svg>
<span class="t" style="left:86px;top:415px;transform:scaleX(0.8694);transform-origin:0 0;">INTERFACE_NAMES</span>
<svg class="i" style="left:65px;top:429px;" width="16" height="16" viewBox="0 0 16 16"><ellipse cx="8.500" cy="7.800" rx="6.300" ry="4.500" fill="#1c8be0" stroke="#0b5fae" stroke-width="0.9"/><ellipse cx="7.500" cy="6.300" rx="4" ry="1.800" fill="#5ab0f4" opacity="0.75"/></svg>
<span class="t" style="left:86px;top:431px;transform:scaleX(0.9220);transform-origin:0 0;">MAIN_WINDOW</span>
<div style="left:13px;top:449px;width:9px;height:9px;border:1px solid #7b9ebd;border-radius:1px;background:linear-gradient(135deg,#fff,#d6d2c2)"><div style="left:1px;top:3px;width:5px;height:1px;background:#000"></div><div style="left:3px;top:1px;width:1px;height:5px;background:#000"></div></div>
<svg class="i" style="left:28px;top:445px;" width="17" height="16" viewBox="0 0 17 16"><path d="M0.500 3.500L1.500 1.500H6.500L7.500 3.500H16V14.500H0.500Z" fill="#f2ea30" stroke="#9a8c10" stroke-width="1"/><path d="M1.500 4.500H15" stroke="#fffaa0" stroke-width="1"/><rect x="1.800" y="5" width="3" height="8" fill="#e03030" stroke="#a02020" stroke-width="0.4"/><rect x="4.800" y="4.600" width="3" height="8.400" fill="#5a4ae0" stroke="#3a2a90" stroke-width="0.4"/><rect x="7.800" y="5" width="3" height="8" fill="#30b030" stroke="#107010" stroke-width="0.4"/><rect x="10.800" y="4.600" width="2.800" height="8.400" fill="#40a0e8" stroke="#2060a0" stroke-width="0.4"/></svg>
<span class="t" style="left:48px;top:447px;letter-spacing:-0.242px;">Libraries</span>
<svg class="i" style="left:27px;top:460px;" width="18" height="18" viewBox="0 0 18 18"><circle cx="9" cy="9" r="7" fill="#fff" stroke="#5a7ae8" stroke-width="1.700"/><circle cx="9" cy="9" r="7.900" fill="none" stroke="#a8baf4" stroke-width="0.6"/><circle cx="9" cy="9" r="3.200" fill="#f01010"/></svg>
<span class="t" style="left:48px;top:463px;letter-spacing:-0.124px;">my_vision2_application</span>
<div style="left:218px;top:156px;width:799px;height:18px;background:#ece9d8;border-top:1px solid #fff;border-left:1px solid #fff;border-right:1px solid #716f64;border-bottom:1px solid #716f64"></div>
<span class="t" style="left:221px;top:159px;letter-spacing:-0.289px;">Editor</span>
<svg class="i" style="left:969px;top:159px;" width="16" height="16" viewBox="0 0 16 16"><rect x="0.500" y="6" width="8" height="3.500" fill="#dfe6fb" stroke="#3a6ad8"/><rect x="1" y="8" width="7" height="1.500" fill="#3a6ad8"/></svg>
<svg class="i" style="left:985px;top:159px;" width="16" height="16" viewBox="0 0 16 16"><rect x="0.500" y="1.500" width="9.500" height="9.500" fill="#e8ecfd" stroke="#3a6ad8"/><rect x="0.500" y="1.500" width="9.500" height="2" fill="#3a6ad8"/></svg>
<svg class="i" style="left:1001px;top:159px;" width="16" height="16" viewBox="0 0 16 16"><path d="M2.500 2.500L9.500 9.500M9.500 2.500L2.500 9.500" stroke="#3a6ad8" stroke-width="3.600" stroke-linecap="round"/><path d="M2.500 2.500L9.500 9.500M9.500 2.500L2.500 9.500" stroke="#f4f6ff" stroke-width="1.600" stroke-linecap="round"/></svg>
<div style="left:218px;top:174px;width:38px;height:322px;background:#d4d0c8"></div>
<div style="left:256px;top:174px;width:745px;height:322px;background:#fff"></div>
<div style="left:1001px;top:174px;width:17px;height:322px;background:linear-gradient(to right,#f3f1ec,#fdfdfb)"></div>
<div style="left:1002px;top:175px;width:13px;height:14px;background:linear-gradient(135deg,#cddcfd 0%,#c1d3fb 50%,#b0c6f7 100%);border-radius:2px;border:1px solid #b9cdf9;box-shadow:0 1px 0 #fff,0 2px 0 #a8bff4,1px 0 0 #fff,-1px 0 0 #fff"></div>
<svg class="i" style="left:1001px;top:175px;" width="15" height="15" viewBox="0 0 15 15"><path d="M3.500 9L7.500 5L11.500 9" fill="none" stroke="#4d6185" stroke-width="2"/></svg>
<div style="left:1002px;top:480px;width:13px;height:14px;background:linear-gradient(135deg,#cddcfd 0%,#c1d3fb 50%,#b0c6f7 100%);border-radius:2px;border:1px solid #b9cdf9;box-shadow:0 1px 0 #fff,0 2px 0 #a8bff4,1px 0 0 #fff,-1px 0 0 #fff"></div>
<svg class="i" style="left:1001px;top:480px;" width="15" height="15" viewBox="0 0 15 15"><path d="M3.500 5.500L7.500 9.500L11.500 5.500" fill="none" stroke="#4d6185" stroke-width="2"/></svg>
<div style="left:1002px;top:268px;width:13px;height:105px;border:1px solid #b9cdf9;border-radius:2px;background:linear-gradient(to right,#cbdafc,#c2d3fc 50%,#b0c6f8);box-shadow:0 1px 0 #fff,0 2px 0 #a8bff4,1px 0 0 #fff,-1px 0 0 #fff"></div>
<div style="left:1006px;top:316px;width:6px;height:1px;background:#eef4fe"></div>
<div style="left:1007px;top:317px;width:6px;height:1px;background:#8cb0f8"></div>
<div style="left:1006px;top:318px;width:6px;height:1px;background:#eef4fe"></div>
<div style="left:1007px;top:319px;width:6px;height:1px;background:#8cb0f8"></div>
<div style="left:1006px;top:320px;width:6px;height:1px;background:#eef4fe"></div>
<div style="left:1007px;top:321px;width:6px;height:1px;background:#8cb0f8"></div>
<div style="left:1006px;top:322px;width:6px;height:1px;background:#eef4fe"></div>
<div style="left:1007px;top:323px;width:6px;height:1px;background:#8cb0f8"></div>
<span class="mono" style="left:240px;top:176px;height:15px;overflow:hidden">16</span>
<span class="mono" style="left:240px;top:191px;height:15px;overflow:hidden">17</span>
<span class="mono" style="left:240px;top:206px;height:15px;overflow:hidden">18</span>
<span class="mono" style="left:240px;top:221px;height:15px;overflow:hidden">19</span>
<span class="mono" style="left:240px;top:236px;height:15px;overflow:hidden">20</span>
<span class="mono" style="left:240px;top:251px;height:15px;overflow:hidden">21</span>
<span class="mono" style="left:240px;top:266px;height:15px;overflow:hidden">22</span>
<span class="mono" style="left:240px;top:281px;height:15px;overflow:hidden">23</span>
<span class="mono" style="left:240px;top:296px;height:15px;overflow:hidden">24</span>
<span class="mono" style="left:240px;top:311px;height:15px;overflow:hidden">25</span>
<span class="mono" style="left:240px;top:326px;height:15px;overflow:hidden">26</span>
<span class="mono" style="left:240px;top:341px;height:15px;overflow:hidden">27</span>
<span class="mono" style="left:240px;top:356px;height:15px;overflow:hidden">28</span>
<span class="mono" style="left:240px;top:371px;height:15px;overflow:hidden">29</span>
<span class="mono" style="left:240px;top:386px;height:15px;overflow:hidden">30</span>
<span class="mono" style="left:240px;top:401px;height:15px;overflow:hidden">31</span>
<span class="mono" style="left:240px;top:416px;height:15px;overflow:hidden">32</span>
<span class="mono" style="left:240px;top:431px;height:15px;overflow:hidden">33</span>
<span class="mono" style="left:240px;top:446px;height:15px;overflow:hidden">34</span>
<span class="mono" style="left:240px;top:461px;height:15px;overflow:hidden">35</span>
<span class="mono" style="left:240px;top:476px;height:15px;overflow:hidden">36</span>
<span class="mono" style="left:240px;top:491px;height:5px;overflow:hidden">37</span>
<span class="mono kw" style="left:264px;top:176px">feature</span>
<span class="mono " style="left:320px;top:176px">{NONE}</span>
<span class="mono cm" style="left:369px;top:176px">-- Initialization</span>
<span class="mono " style="left:292px;top:206px">make_and_launch</span>
<span class="mono kw" style="left:404px;top:206px">is</span>
<span class="mono cm" style="left:348px;top:221px">-- Initialize and launch application</span>
<span class="mono kw" style="left:320px;top:236px">do</span>
<span class="mono " style="left:348px;top:251px">io.put</span>
<div style="left:390px;top:250px;width:2px;height:15px;background:#000"></div>
<span class="mono " style="left:348px;top:266px">def</span>
<span class="mono " style="left:348px;top:281px">prepare</span>
<span class="mono " style="left:348px;top:296px">launch</span>
<span class="mono kw" style="left:320px;top:311px">end</span>
<span class="mono " style="left:292px;top:341px">prepare</span>
<span class="mono kw" style="left:348px;top:341px">is</span>
<span class="mono cm" style="left:348px;top:356px">-- Prepare the first window to be displayed.</span>
<span class="mono cm" style="left:348px;top:371px">-- Perform one call to first window in order to</span>
<span class="mono cm" style="left:348px;top:386px">-- avoid to violate the invariant of class EV_APPLICATION.</span>
<span class="mono kw" style="left:320px;top:401px">do</span>
<div style="left:367px;top:386px;width:4px;height:45px;background:#fff"></div>
<span class="mono cm" style="left:376px;top:416px">-- create and initialize the first window.</span>
<span class="mono kw" style="left:348px;top:431px">create</span>
<span class="mono " style="left:397px;top:431px">first_window</span>
<span class="mono cm" style="left:376px;top:461px">-- Show the first window.</span>
<span class="mono cm" style="left:376px;top:476px">--| TODO: Remove this line if you don&#x27;t want the first</span>
<div style="left:218px;top:501px;width:799px;height:1px;background:#b5b2a2"></div>
<div style="left:218px;top:502px;width:799px;height:18px;background:#ece9d8;border-top:1px solid #fff;border-left:1px solid #fff;border-right:1px solid #716f64;border-bottom:1px solid #716f64"></div>
<span class="t" style="left:221px;top:505px;letter-spacing:-0.415px;">Context</span>
<svg class="i" style="left:969px;top:505px;" width="16" height="16" viewBox="0 0 16 16"><rect x="0.500" y="6" width="8" height="3.500" fill="#dfe6fb" stroke="#3a6ad8"/><rect x="1" y="8" width="7" height="1.500" fill="#3a6ad8"/></svg>
<svg class="i" style="left:985px;top:505px;" width="16" height="16" viewBox="0 0 16 16"><rect x="0.500" y="1.500" width="9.500" height="9.500" fill="#e8ecfd" stroke="#3a6ad8"/><rect x="0.500" y="1.500" width="9.500" height="2" fill="#3a6ad8"/></svg>
<svg class="i" style="left:1001px;top:505px;" width="16" height="16" viewBox="0 0 16 16"><path d="M2.500 2.500L9.500 9.500M9.500 2.500L2.500 9.500" stroke="#3a6ad8" stroke-width="3.600" stroke-linecap="round"/><path d="M2.500 2.500L9.500 9.500M9.500 2.500L2.500 9.500" stroke="#f4f6ff" stroke-width="1.600" stroke-linecap="round"/></svg>
<svg class="i" style="left:265px;top:503px;" width="16" height="16" viewBox="0 0 16 16"><path d="M12.500 3V13L2.500 8Z" fill="#3fc028" stroke="#1f8a14" stroke-width="0.9" stroke-linejoin="round"/></svg>
<svg class="i" style="left:282px;top:503px;" width="16" height="16" viewBox="0 0 16 16"><path d="M3 3V13L13 8Z" fill="#aca899"/><path d="M3 13L13 8" stroke="#fff" stroke-width="0.8"/></svg>
<span class="t" style="left:300px;top:505px;color:#800000;letter-spacing:-0.213px;">base</span>
<span class="t" style="left:332px;top:505px;color:#0000ff;letter-spacing:-0.671px;">HASH_TABLE</span>
<div style="left:218px;top:520px;width:800px;height:198px;background:#ece9d8"></div>
<div style="left:220px;top:520px;width:794px;height:197px;background:#fbfaf7"></div>
<div style="left:220px;top:520px;width:794px;height:27px;background:#fff"></div>
<div style="left:1014px;top:520px;width:1px;height:197px;background:#a9b2b5"></div>
<div style="left:223px;top:546px;width:791px;height:1px;background:#c5c2b8"></div>
<div style="left:220px;top:547px;width:794px;height:23px;background:#fbfaf7"></div>
<div style="left:218px;top:520px;width:2px;height:197px;background:#9a9c98"></div>
<svg class="i" style="left:226px;top:527px;" width="16" height="16" viewBox="0 0 16 16"><ellipse cx="3.5" cy="3" rx="3.2" ry="2.4" fill="#2a5ae0" stroke="#1a3ab0" stroke-width="0.5"/><ellipse cx="12" cy="3" rx="3.2" ry="2.4" fill="#2a5ae0" stroke="#1a3ab0" stroke-width="0.5"/><ellipse cx="8" cy="13" rx="3.2" ry="2.4" fill="#e81818" stroke="#a01010" stroke-width="0.5"/><path d="M6.500 11L4 6.500M9.500 11L12 6.500" stroke="#e81818" stroke-width="1.100"/><path d="M3 8.500L4 6L6.500 7M9.500 7L12 6L13 8.500" fill="none" stroke="#e81818" stroke-width="1"/></svg>
<svg class="i" style="left:249px;top:527px;" width="16" height="16" viewBox="0 0 16 16"><ellipse cx="8" cy="3" rx="3.2" ry="2.4" fill="#e81818" stroke="#a01010" stroke-width="0.5"/><ellipse cx="3.5" cy="13" rx="3.2" ry="2.4" fill="#2a5ae0" stroke="#1a3ab0" stroke-width="0.5"/><ellipse cx="12.5" cy="13" rx="3.2" ry="2.4" fill="#2a5ae0" stroke="#1a3ab0" stroke-width="0.5"/><path d="M4 10.500L7 6M12 10.500L9 6" stroke="#e81818" stroke-width="1.100"/><path d="M4.500 7L7 5.500L7.500 8.500M8.500 8.500L9 5.500L11.500 7" fill="none" stroke="#e81818" stroke-width="1"/></svg>
<svg class="i" style="left:273px;top:527px;" width="16" height="16" viewBox="0 0 16 16"><ellipse cx="10.5" cy="8" rx="3.6" ry="2.6" fill="#2a5ae0" stroke="#1a3ab0" stroke-width="0.5"/><path d="M1 2L5 6M1 14L5 10" stroke="#2a4af0" stroke-width="1.500"/><path d="M2.500 6H5.500V3M2.500 10H5.500V13" fill="none" stroke="#2a4af0" stroke-width="1.300"/></svg>
<svg class="i" style="left:296px;top:527px;" width="16" height="16" viewBox="0 0 16 16"><ellipse cx="4.5" cy="8" rx="3.6" ry="2.6" fill="#2a5ae0" stroke="#1a3ab0" stroke-width="0.5"/><path d="M9.500 6L13.500 2M9.500 10L13.500 14" stroke="#2a4af0" stroke-width="1.500"/><path d="M10.500 2H13.500V5M10.500 14H13.500V11" fill="none" stroke="#2a4af0" stroke-width="1.300"/></svg>
<svg class="i" style="left:326px;top:527px;" width="16" height="16" viewBox="0 0 16 16"><rect x="1" y="1.500" width="14" height="13" fill="#f4f8ff" stroke="#2a4ab8" stroke-width="1.200"/><path d="M1.500 14L7 6L10.500 10L12 9L14.500 12V14Z" fill="#4aa850"/><path d="M7 6L10.500 10L12 9L14.500 12" fill="none" stroke="#445" stroke-width="0.8"/><circle cx="10.500" cy="4.500" r="1.800" fill="#f0a020" stroke="#e04020" stroke-width="0.6"/></svg>
<svg class="i" style="left:349px;top:527px;" width="16" height="16" viewBox="0 0 16 16"><circle cx="6.500" cy="6.500" r="5.500" fill="#fff" stroke="#4a6ae0" stroke-width="1.600"/><circle cx="6.500" cy="6.500" r="2.300" fill="#e81010"/><path d="M5.500 8.500L6.500 7H10L11 8.500H15.500V15.500H5.500Z" fill="#efe04a" stroke="#9a8a10" stroke-width="0.9"/><ellipse cx="4" cy="12" rx="3.500" ry="2.600" fill="#3a7ae0" stroke="#1a4aa8" stroke-width="0.6"/><ellipse cx="13" cy="12.500" rx="1.500" ry="1.100" fill="#3a7ae0"/></svg>
<svg class="i" style="left:226px;top:551px;" width="16" height="16" viewBox="0 0 16 16"><ellipse cx="8.500" cy="9.500" rx="6" ry="4.300" fill="#1c8be0" stroke="#0b5fae" stroke-width="0.8"/><ellipse cx="7.500" cy="8" rx="3.500" ry="1.600" fill="#4aa6ee" opacity="0.7"/><path transform="translate(0 2) scale(1.17)" d="M3 0L4 2L6 3L4 4L3 6L2 4L0 3L2 2Z" fill="#fff05a" stroke="#8a7a10" stroke-width="0.7"/></svg>
<svg class="i" style="left:249px;top:551px;" width="16" height="16" viewBox="0 0 16 16"><path d="M8 1.500L13 8.500H10V15.500H6V8.500H3Z" fill="#e04818" stroke="#a02808" stroke-width="0.7"/><path transform="translate(0 1) scale(1.17)" d="M3 0L4 2L6 3L4 4L3 6L2 4L0 3L2 2Z" fill="#fff05a" stroke="#8a7a10" stroke-width="0.7"/></svg>
<svg class="i" style="left:279px;top:551px;" width="16" height="16" viewBox="0 0 16 16"><path d="M2.500 1.500L14 14.500M14 1.500L2.500 14.500" stroke="#b82020" stroke-width="1.900"/></svg>
<svg class="i" style="left:301px;top:551px;" width="16" height="16" viewBox="0 0 16 16"><circle cx="6" cy="2.500" r="1.600" fill="none" stroke="#222" stroke-width="1"/><path d="M6 4V13M3 6.500H9M1 9C1.500 12 4 13.500 6 13.500C8 13.500 10.500 12 11 9" fill="none" stroke="#222" stroke-width="1.300"/><path d="M7 7L15 15M15 7L7 15" stroke="#c02020" stroke-width="1.300"/></svg>
<svg class="i" style="left:324px;top:551px;" width="16" height="16" viewBox="0 0 16 16"><path d="M1 11.500L6 4.500H15.500L10.500 11.500Z" fill="#fbf6b0" stroke="#b0a030" stroke-width="0.9"/><path d="M1 11.500H10.500L15.500 4.500V7.500L10.500 14.500H1Z" fill="#e8dc60" stroke="#b0a030" stroke-width="0.9"/></svg>
<svg class="i" style="left:355px;top:551px;" width="16" height="16" viewBox="0 0 16 16"><rect x="3.500" y="0.500" width="9" height="9" fill="#e85a38" stroke="#903018" stroke-width="0.8"/><rect x="7" y="7" width="4" height="4" fill="#30a030"/><rect x="11" y="7" width="4" height="4" fill="#f0e040"/><rect x="11" y="11" width="4" height="4" fill="#3050e0"/><rect x="7" y="11" width="4" height="4" fill="#30a030"/></svg>
<span class="t" style="left:869px;top:529px;letter-spacing:-0.161px;">View</span>
<div class="combo" style="left:895px;top:524px;width:100px;height:22px;"></div>
<span class="t" style="left:898px;top:528px;font-size:12px;line-height:14px;letter-spacing:-0.648px;">DEFAULT:BON</span>
<div style="left:996px;top:525px;width:16px;height:20px;border:1px solid #1c3a6e;border-radius:3px;background:linear-gradient(#fff,#dfe6f4)"></div>
<svg class="i" style="left:996px;top:527px;" width="16" height="16" viewBox="0 0 16 16"><path d="M4 7H12L8 11Z" fill="#000"/></svg>
<span class="t" style="left:927px;top:553px;letter-spacing:-0.279px;">Zoom</span>
<div class="combo" style="left:958px;top:548px;width:55px;height:22px;"></div>
<span class="t" style="left:961px;top:553px;letter-spacing:-0.672px;">90%</span>
<div class="arrow" style="left:996px;top:550px;width:15px;height:18px;"></div>
<svg class="i" style="left:995px;top:551px;" width="16" height="16" viewBox="0 0 16 16"><path d="M4.500 6L8.500 10L12.500 6" fill="none" stroke="#4d6185" stroke-width="2"/></svg>
<div style="left:223px;top:570px;width:771px;height:130px;background:#fffff0;border-top:1px solid #c9c9b8;border-left:1px solid #c9c9b8;border-radius:3px 0 0 0;overflow:hidden"><svg class="i" style="left:-1px;top:-1px" width="771" height="130" viewBox="223 570 771 130"><ellipse cx="484.500" cy="700.500" rx="30.500" ry="21.500" fill="#ccccfc" stroke="#444" stroke-width="1"/><ellipse cx="881" cy="700.500" rx="64" ry="21.500" fill="#ccccfc" stroke="#444" stroke-width="1"/><path d="M508.300 685.200L617 625" stroke="#e6000f" stroke-width="2.200"/><path d="M617 629.200L832.400 686.200" stroke="#e6000f" stroke-width="2.200"/><path d="M572.500 651H577.500L575 654Z" fill="#e6000f"/><text x="479.200" y="695" font-family="Liberation Sans,sans-serif" font-size="16" font-weight="bold" fill="#000080">*</text><text x="875.200" y="695" font-family="Liberation Sans,sans-serif" font-size="16" font-weight="bold" fill="#000080">*</text></svg></div>
<div style="left:994px;top:570px;width:17px;height:130px;background:linear-gradient(to right,#f3f1ec,#fdfdfb)"></div>
<div style="left:995px;top:572px;width:13px;height:14px;background:linear-gradient(135deg,#cddcfd 0%,#c1d3fb 50%,#b0c6f7 100%);border-radius:2px;border:1px solid #b9cdf9;box-shadow:0 1px 0 #fff,0 2px 0 #a8bff4,1px 0 0 #fff,-1px 0 0 #fff"></div>
<svg class="i" style="left:994px;top:572px;" width="15" height="15" viewBox="0 0 15 15"><path d="M3.500 9L7.500 5L11.500 9" fill="none" stroke="#4d6185" stroke-width="2"/></svg>
<div style="left:995px;top:684px;width:13px;height:14px;background:linear-gradient(135deg,#cddcfd 0%,#c1d3fb 50%,#b0c6f7 100%);border-radius:2px;border:1px solid #b9cdf9;box-shadow:0 1px 0 #fff,0 2px 0 #a8bff4,1px 0 0 #fff,-1px 0 0 #fff"></div>
<svg class="i" style="left:994px;top:684px;" width="15" height="15" viewBox="0 0 15 15"><path d="M3.500 5.500L7.500 9.500L11.500 5.500" fill="none" stroke="#4d6185" stroke-width="2"/></svg>
<div style="left:995px;top:595px;width:13px;height:21px;border:1px solid #b9cdf9;border-radius:2px;background:linear-gradient(to right,#cbdafc,#c2d3fc 50%,#b0c6f8);box-shadow:0 1px 0 #fff,0 2px 0 #a8bff4,1px 0 0 #fff,-1px 0 0 #fff"></div>
<div style="left:999px;top:601px;width:6px;height:1px;background:#eef4fe"></div>
<div style="left:1000px;top:602px;width:6px;height:1px;background:#8cb0f8"></div>
<div style="left:999px;top:603px;width:6px;height:1px;background:#eef4fe"></div>
<div style="left:1000px;top:604px;width:6px;height:1px;background:#8cb0f8"></div>
<div style="left:999px;top:605px;width:6px;height:1px;background:#eef4fe"></div>
<div style="left:1000px;top:606px;width:6px;height:1px;background:#8cb0f8"></div>
<div style="left:999px;top:607px;width:6px;height:1px;background:#eef4fe"></div>
<div style="left:1000px;top:608px;width:6px;height:1px;background:#8cb0f8"></div>
<div style="left:224px;top:700px;width:787px;height:17px;background:linear-gradient(to bottom,#f3f1ec,#fdfdfb)"></div>
<div style="left:226px;top:701px;width:14px;height:13px;background:linear-gradient(135deg,#cddcfd 0%,#c1d3fb 50%,#b0c6f7 100%);border-radius:2px;border:1px solid #b9cdf9;box-shadow:1px 0 0 #fff,2px 0 0 #a8bff4,0 1px 0 #fff,0 -1px 0 #fff"></div>
<svg class="i" style="left:226px;top:700px;" width="15" height="15" viewBox="0 0 15 15"><path d="M9 3.500L5 7.500L9 11.500" fill="none" stroke="#4d6185" stroke-width="2"/></svg>
<div style="left:996px;top:701px;width:14px;height:13px;background:linear-gradient(135deg,#cddcfd 0%,#c1d3fb 50%,#b0c6f7 100%);border-radius:2px;border:1px solid #b9cdf9;box-shadow:1px 0 0 #fff,2px 0 0 #a8bff4,0 1px 0 #fff,0 -1px 0 #fff"></div>
<svg class="i" style="left:996px;top:700px;" width="15" height="15" viewBox="0 0 15 15"><path d="M5.500 3.500L9.500 7.500L5.500 11.500" fill="none" stroke="#4d6185" stroke-width="2"/></svg>
<div style="left:243px;top:701px;width:657px;height:13px;border:1px solid #b9cdf9;border-radius:2px;background:linear-gradient(to bottom,#cbdafc,#c2d3fc 50%,#b0c6f8);box-shadow:1px 0 0 #fff,2px 0 0 #a8bff4,0 1px 0 #fff,0 -1px 0 #fff"></div>
<div style="left:567px;top:704px;width:1px;height:6px;background:#eef4fe"></div>
<div style="left:568px;top:705px;width:1px;height:6px;background:#8cb0f8"></div>
<div style="left:569px;top:704px;width:1px;height:6px;background:#eef4fe"></div>
<div style="left:570px;top:705px;width:1px;height:6px;background:#8cb0f8"></div>
<div style="left:571px;top:704px;width:1px;height:6px;background:#eef4fe"></div>
<div style="left:572px;top:705px;width:1px;height:6px;background:#8cb0f8"></div>
<div style="left:573px;top:704px;width:1px;height:6px;background:#eef4fe"></div>
<div style="left:574px;top:705px;width:1px;height:6px;background:#8cb0f8"></div>
<div style="left:218px;top:717px;width:800px;height:1px;background:#c5c2b8"></div>
<div style="left:218px;top:740px;width:800px;height:2px;background:#fff"></div>
<div style="left:218px;top:718px;width:1px;height:22px;background:#8a8778"></div>
<div class="tab" style="left:222px;top:720px;width:64px;height:20px;"></div>
<svg class="i" style="left:227px;top:721px;" width="16" height="16" viewBox="0 0 16 16"><rect x="0.500" y="1.500" width="15" height="13" fill="#f4f6ff" stroke="#3a6ad8"/><rect x="1" y="2" width="14" height="2.500" fill="#4a78e0"/><path d="M3 6.500H13M3 8.500H13M3 10.500H13M3 12.500H13" stroke="#50586e" stroke-width="1"/></svg>
<span class="t" style="left:250px;top:722px;font-size:12px;line-height:14px;transform:scaleX(0.8606);transform-origin:0 0;">Output</span>
<div style="left:285px;top:718px;width:78px;height:23px;border:1px solid #919b9c;border-bottom:none;border-top:none;border-radius:3px 3px 0 0;background:#fcfcfe;overflow:hidden"><div style="left:-1px;top:0;width:80px;height:3px;background:linear-gradient(#e68b2c,#ffc73c 40%,#ffc73c)"></div></div>
<svg class="i" style="left:293px;top:722px;" width="16" height="16" viewBox="0 0 16 16"><path d="M1.500 2.500H11.500V15H1.500Z" fill="#f0f4ff" stroke="#3a6ad8"/><path d="M3 11.500H8" stroke="#3a6ad8" stroke-width="1"/><path d="M5 12L4.500 9L11.500 1.500L14.500 4L7.500 11.500Z" fill="#3fba30" stroke="#1a7a14" stroke-width="0.8"/><path d="M11.500 1.500L13 0.500L15.500 2.500L14.500 4Z" fill="#e83a20" stroke="#a01a10" stroke-width="0.6"/><path d="M5 12L4.500 9L7.500 11.500Z" fill="#f0d890"/></svg>
<span class="t" style="left:316px;top:723px;font-size:12px;line-height:14px;transform:scaleX(0.8381);transform-origin:0 0;">Diagram</span>
<div class="tab" style="left:363px;top:720px;width:55px;height:20px;"></div>
<svg class="i" style="left:366px;top:721px;" width="16" height="16" viewBox="0 0 16 16"><ellipse cx="8.500" cy="7.800" rx="6.300" ry="4.500" fill="#1c8be0" stroke="#0b5fae" stroke-width="0.9"/><ellipse cx="7.500" cy="6.300" rx="4" ry="1.800" fill="#5ab0f4" opacity="0.75"/></svg>
<span class="t" style="left:389px;top:722px;font-size:12px;line-height:14px;transform:scaleX(0.8332);transform-origin:0 0;">Class</span>
<div class="tab" style="left:419px;top:720px;width:69px;height:20px;"></div>
<svg class="i" style="left:425px;top:721px;" width="16" height="16" viewBox="0 0 16 16"><path transform="translate(0.5 5) scale(1.08)" d="M3 0H6V3H9V6H6V9H3V6H0V3H3Z" fill="#3fae2a" stroke="#1d6b12" stroke-width="0.9" stroke-linejoin="round"/><path transform="translate(0.5 5) scale(1.08)" d="M3.800 0.800H5.200M0.800 3.800H5" stroke="#8fe070" stroke-width="0.8" fill="none"/><path d="M10 1.500H16M11 3.500H16M12 5.500H16" stroke="#555" stroke-width="1"/></svg>
<span class="t" style="left:448px;top:722px;font-size:12px;line-height:14px;transform:scaleX(0.8706);transform-origin:0 0;">Feature</span>
<div class="tab" style="left:490px;top:720px;width:61px;height:20px;"></div>
<svg class="i" style="left:496px;top:721px;" width="16" height="16" viewBox="0 0 16 16"><rect x="0.500" y="1.500" width="15" height="13" fill="#f4f6ff" stroke="#3a6ad8"/><rect x="1" y="2" width="14" height="2.500" fill="#4a78e0"/><circle cx="9" cy="10" r="5" fill="#e85040"/><path d="M9 10V5A5 5 0 0 1 13.800 11.500Z" fill="#6ac050"/><path d="M9 10L13.800 11.500A5 5 0 0 1 7 14.600Z" fill="#e8c840"/></svg>
<span class="t" style="left:518px;top:722px;font-size:12px;line-height:14px;transform:scaleX(0.8572);transform-origin:0 0;">Metric</span>
<div class="tab" style="left:552px;top:720px;width:105px;height:20px;"></div>
<svg class="i" style="left:558px;top:721px;" width="16" height="16" viewBox="0 0 16 16"><rect x="0.500" y="1.500" width="15" height="13" fill="#f4f6ff" stroke="#3a6ad8"/><rect x="1" y="2" width="14" height="2.500" fill="#4a78e0"/><path d="M3 7L5.500 9.500L3 12" fill="none" stroke="#223" stroke-width="1.100"/><path d="M7 12H8M9.500 12H10.500M9 7.500H13M9 9.500H13M12 12H13" stroke="#556" stroke-width="1"/></svg>
<span class="t" style="left:581px;top:722px;font-size:12px;line-height:14px;transform:scaleX(0.8516);transform-origin:0 0;">External Output</span>
<div class="tab" style="left:659px;top:720px;width:74px;height:20px;"></div>
<svg class="i" style="left:665px;top:721px;" width="16" height="16" viewBox="0 0 16 16"><rect x="0.500" y="1.500" width="15" height="13" fill="#f4f6ff" stroke="#3a6ad8"/><rect x="1" y="2" width="14" height="2.500" fill="#4a78e0"/><path d="M6.500 7.500C4.500 6.500 3 8 3 9.500C3 11.500 5 12.500 6.500 11.500" fill="none" stroke="#20902a" stroke-width="1.500"/><path d="M8.500 7H13M8.500 9.500H13M8.500 12H13" stroke="#6a7088" stroke-width="1"/></svg>
<span class="t" style="left:688px;top:722px;font-size:12px;line-height:14px;transform:scaleX(0.8538);transform-origin:0 0;">C Output</span>
<div class="tab" style="left:735px;top:720px;width:60px;height:20px;"></div>
<svg class="i" style="left:742px;top:722px;" width="14" height="14" viewBox="0 0 16 16"><circle cx="8" cy="8" r="7.200" fill="#e84838" stroke="#c02818" stroke-width="0.8"/><circle cx="8" cy="6.500" r="5" fill="#f07868" opacity="0.5"/><path d="M5.500 5.500L10.500 10.500M10.500 5.500L5.500 10.500" stroke="#fff" stroke-width="2"/></svg>
<span class="t" style="left:764px;top:722px;font-size:12px;line-height:14px;transform:scaleX(0.8113);transform-origin:0 0;">Errors</span>
<div class="tab" style="left:797px;top:720px;width:76px;height:20px;"></div>
<svg class="i" style="left:803px;top:722px;" width="14" height="14" viewBox="0 0 16 16"><path d="M8 1L15.500 14.500H0.500Z" fill="#f4e030" stroke="#8a7a10" stroke-width="1" stroke-linejoin="round"/><rect x="7.200" y="5" width="1.700" height="5.500" fill="#000"/><rect x="7.200" y="11.500" width="1.700" height="1.700" fill="#000"/></svg>
<span class="t" style="left:825px;top:722px;font-size:12px;line-height:14px;transform:scaleX(0.8759);transform-origin:0 0;">Warnings</span>
<div style="left:4px;top:761px;width:1014px;height:1px;background:#fff"></div>
<div style="left:4px;top:743px;width:1014px;height:1px;background:#f6f4ec"></div>
<div style="left:4px;top:744px;width:1014px;height:1px;background:#b8b5a6"></div>
<div style="left:685px;top:745px;width:99px;height:16px;border:1px solid #5a5a5a;border-radius:3px;background:#fff"></div>
<div style="left:786px;top:744px;width:119px;height:17px;border:1px solid #fff;border-top-color:#aca899;border-left-color:#aca899"></div>
<span class="t" style="left:790px;top:747px;letter-spacing:-0.124px;">my_vision2_application</span>
<div style="left:908px;top:744px;width:48px;height:17px;border:1px solid #fff;border-top-color:#aca899;border-left-color:#aca899"></div>
<span class="t" style="left:919px;top:747px;letter-spacing:-0.305px;">21:10</span>
<svg class="i" style="left:960px;top:745px;" width="16" height="16" viewBox="0 0 16 16"><path d="M1.500 2.500H11.500V15H1.500Z" fill="#f0f4ff" stroke="#3a6ad8"/><path d="M3 11.500H8" stroke="#3a6ad8" stroke-width="1"/><path d="M5 12L4.500 9L11.500 1.500L14.500 4L7.500 11.500Z" fill="#3fba30" stroke="#1a7a14" stroke-width="0.8"/><path d="M11.500 1.500L13 0.500L15.500 2.500L14.500 4Z" fill="#e83a20" stroke="#a01a10" stroke-width="0.6"/><path d="M5 12L4.500 9L7.500 11.500Z" fill="#f0d890"/></svg>
<svg class="i" style="left:982px;top:745px;" width="16" height="16" viewBox="0 0 16 16"><path d="M1 9L8 6L15 9L8 12Z" fill="#d8d8d8" stroke="#808080" stroke-width="0.8"/><path d="M1 11.500L8 14.500L15 11.500M1 9V11.500M15 9V11.500" fill="none" stroke="#808080" stroke-width="0.8"/><path d="M1 11.500L8 14.500L15 11.500V9L8 12L1 9Z" fill="#b8b8b8"/><path d="M4 5.500L7.500 9L14 1.500" fill="none" stroke="#2aa81a" stroke-width="2.600"/></svg>
<div style="left:1001px;top:744px;width:1px;height:17px;background:#aca899"></div>
<div style="left:1002px;top:744px;width:1px;height:17px;background:#fff"></div>
<div style="left:370px;top:269px;width:345px;height:382px;background:#ece9d8;border:1px solid #f1efe2;border-right-color:#716f64;border-bottom-color:#716f64"></div>
<div style="left:371px;top:270px;width:343px;height:380px;border:1px solid #fff;border-right-color:#aca899;border-bottom-color:#aca899"></div>
<div style="left:372px;top:271px;width:340px;height:357px;background:#fff;border:1px solid #bab7a9;border-right-color:#ece9d8;border-bottom-color:#9d9a8c"></div>
<div style="left:374px;top:273px;width:338px;height:16px;background:#000080"></div>
<svg class="i" style="left:375px;top:273px;" width="16" height="16" viewBox="0 0 16 16"><path transform="translate(0.5 5) scale(1.08)" d="M3 0H6V3H9V6H6V9H3V6H0V3H3Z" fill="#3fae2a" stroke="#1d6b12" stroke-width="0.9" stroke-linejoin="round"/><path transform="translate(0.5 5) scale(1.08)" d="M3.800 0.800H5.200M0.800 3.800H5" stroke="#8fe070" stroke-width="0.8" fill="none"/><path d="M10 1.500H16M11 3.500H16M12 5.500H16" stroke="#b4b4b4" stroke-width="1"/></svg>
<span class="t" style="left:393px;top:275px;letter-spacing:-0.09px"><span style="color:#ffff90">put_boolean</span><span style="letter-spacing:0.33px"> <span style="color:#ffff90">(</span><span style="color:#ffff90">b: </span></span><span style="color:#ffff90;letter-spacing:-0.369px">BOOLEAN</span><span style="color:#ffff90">)</span></span>
<svg class="i" style="left:375px;top:289px;" width="16" height="16" viewBox="0 0 16 16"><path transform="translate(0.5 5) scale(1.08)" d="M3 0H6V3H9V6H6V9H3V6H0V3H3Z" fill="#3fae2a" stroke="#1d6b12" stroke-width="0.9" stroke-linejoin="round"/><path transform="translate(0.5 5) scale(1.08)" d="M3.800 0.800H5.200M0.800 3.800H5" stroke="#8fe070" stroke-width="0.8" fill="none"/><path d="M10 1.500H16M11 3.500H16M12 5.500H16" stroke="#b4b4b4" stroke-width="1"/></svg>
<span class="t" style="left:393px;top:291px;letter-spacing:-0.09px"><span style="color:#008000">put_character</span><span style="letter-spacing:0.33px"> <span style="color:#f00">(</span><span style="color:#000">c: </span></span><span style="color:#00f;letter-spacing:-0.517px">CHARACTER_8</span><span style="color:#f00">)</span></span>
<svg class="i" style="left:375px;top:305px;" width="16" height="16" viewBox="0 0 16 16"><path transform="translate(0.5 5) scale(1.08)" d="M3 0H6V3H9V6H6V9H3V6H0V3H3Z" fill="#3fae2a" stroke="#1d6b12" stroke-width="0.9" stroke-linejoin="round"/><path transform="translate(0.5 5) scale(1.08)" d="M3.800 0.800H5.200M0.800 3.800H5" stroke="#8fe070" stroke-width="0.8" fill="none"/><path d="M10 1.500H16M11 3.500H16M12 5.500H16" stroke="#b4b4b4" stroke-width="1"/></svg>
<span class="t" style="left:393px;top:307px;letter-spacing:-0.09px"><span style="color:#008000">put_double</span><span style="letter-spacing:0.33px"> <span style="color:#f00">(</span><span style="color:#000">d: </span></span><span style="color:#00f;letter-spacing:-0.298px">REAL_64</span><span style="color:#f00">)</span></span>
<svg class="i" style="left:375px;top:321px;" width="16" height="16" viewBox="0 0 16 16"><path transform="translate(0.5 5) scale(1.08)" d="M3 0H6V3H9V6H6V9H3V6H0V3H3Z" fill="#3fae2a" stroke="#1d6b12" stroke-width="0.9" stroke-linejoin="round"/><path transform="translate(0.5 5) scale(1.08)" d="M3.800 0.800H5.200M0.800 3.800H5" stroke="#8fe070" stroke-width="0.8" fill="none"/><path d="M10 1.500H16M11 3.500H16M12 5.500H16" stroke="#b4b4b4" stroke-width="1"/></svg>
<span class="t" style="left:393px;top:323px;letter-spacing:-0.09px"><span style="color:#008000">put_integer</span><span style="letter-spacing:-0.05px"> <span style="color:#f00">(</span><span style="color:#000">i: </span></span><span style="color:#00f;letter-spacing:-0.625px">INTEGER_32</span><span style="color:#f00">)</span></span>
<svg class="i" style="left:375px;top:337px;" width="16" height="16" viewBox="0 0 16 16"><path transform="translate(0.5 5) scale(1.08)" d="M3 0H6V3H9V6H6V9H3V6H0V3H3Z" fill="#3fae2a" stroke="#1d6b12" stroke-width="0.9" stroke-linejoin="round"/><path transform="translate(0.5 5) scale(1.08)" d="M3.800 0.800H5.200M0.800 3.800H5" stroke="#8fe070" stroke-width="0.8" fill="none"/><path d="M10 1.500H16M11 3.500H16M12 5.500H16" stroke="#b4b4b4" stroke-width="1"/></svg>
<span class="t" style="left:393px;top:339px;letter-spacing:-0.09px"><span style="color:#008000">put_integer_16</span><span style="letter-spacing:-0.05px"> <span style="color:#f00">(</span><span style="color:#000">i: </span></span><span style="color:#00f;letter-spacing:-0.585px">INTEGER_16</span><span style="color:#f00">)</span></span>
<svg class="i" style="left:375px;top:353px;" width="16" height="16" viewBox="0 0 16 16"><path transform="translate(0.5 5) scale(1.08)" d="M3 0H6V3H9V6H6V9H3V6H0V3H3Z" fill="#3fae2a" stroke="#1d6b12" stroke-width="0.9" stroke-linejoin="round"/><path transform="translate(0.5 5) scale(1.08)" d="M3.800 0.800H5.200M0.800 3.800H5" stroke="#8fe070" stroke-width="0.8" fill="none"/><path d="M10 1.500H16M11 3.500H16M12 5.500H16" stroke="#b4b4b4" stroke-width="1"/></svg>
<span class="t" style="left:393px;top:355px;letter-spacing:-0.09px"><span style="color:#008000">put_integer_32</span><span style="letter-spacing:-0.05px"> <span style="color:#f00">(</span><span style="color:#000">i: </span></span><span style="color:#00f;letter-spacing:-0.625px">INTEGER_32</span><span style="color:#f00">)</span></span>
<svg class="i" style="left:375px;top:369px;" width="16" height="16" viewBox="0 0 16 16"><path transform="translate(0.5 5) scale(1.08)" d="M3 0H6V3H9V6H6V9H3V6H0V3H3Z" fill="#3fae2a" stroke="#1d6b12" stroke-width="0.9" stroke-linejoin="round"/><path transform="translate(0.5 5) scale(1.08)" d="M3.800 0.800H5.200M0.800 3.800H5" stroke="#8fe070" stroke-width="0.8" fill="none"/><path d="M10 1.500H16M11 3.500H16M12 5.500H16" stroke="#b4b4b4" stroke-width="1"/></svg>
<span class="t" style="left:393px;top:371px;letter-spacing:-0.09px"><span style="color:#008000">put_integer_64</span><span style="letter-spacing:-0.05px"> <span style="color:#f00">(</span><span style="color:#000">i: </span></span><span style="color:#00f;letter-spacing:-0.585px">INTEGER_64</span><span style="color:#f00">)</span></span>
<svg class="i" style="left:375px;top:385px;" width="16" height="16" viewBox="0 0 16 16"><path transform="translate(0.5 5) scale(1.08)" d="M3 0H6V3H9V6H6V9H3V6H0V3H3Z" fill="#3fae2a" stroke="#1d6b12" stroke-width="0.9" stroke-linejoin="round"/><path transform="translate(0.5 5) scale(1.08)" d="M3.800 0.800H5.200M0.800 3.800H5" stroke="#8fe070" stroke-width="0.8" fill="none"/><path d="M10 1.500H16M11 3.500H16M12 5.500H16" stroke="#b4b4b4" stroke-width="1"/></svg>
<span class="t" style="left:393px;top:387px;letter-spacing:-0.09px"><span style="color:#008000">put_integer_8</span><span style="letter-spacing:-0.05px"> <span style="color:#f00">(</span><span style="color:#000">i: </span></span><span style="color:#00f;letter-spacing:-0.748px">INTEGER_8</span><span style="color:#f00">)</span></span>
<svg class="i" style="left:375px;top:401px;" width="16" height="16" viewBox="0 0 16 16"><path transform="translate(0.5 5) scale(1.08)" d="M3 0H6V3H9V6H6V9H3V6H0V3H3Z" fill="#3fae2a" stroke="#1d6b12" stroke-width="0.9" stroke-linejoin="round"/><path transform="translate(0.5 5) scale(1.08)" d="M3.800 0.800H5.200M0.800 3.800H5" stroke="#8fe070" stroke-width="0.8" fill="none"/><path d="M10 1.500H16M11 3.500H16M12 5.500H16" stroke="#b4b4b4" stroke-width="1"/></svg>
<span class="t" style="left:393px;top:403px;letter-spacing:-0.09px"><span style="color:#008000">put_natural</span><span style="letter-spacing:-0.05px"> <span style="color:#f00">(</span><span style="color:#000">i: </span></span><span style="color:#00f;letter-spacing:-0.118px">NATURAL_32</span><span style="color:#f00">)</span></span>
<svg class="i" style="left:375px;top:417px;" width="16" height="16" viewBox="0 0 16 16"><path transform="translate(0.5 5) scale(1.08)" d="M3 0H6V3H9V6H6V9H3V6H0V3H3Z" fill="#3fae2a" stroke="#1d6b12" stroke-width="0.9" stroke-linejoin="round"/><path transform="translate(0.5 5) scale(1.08)" d="M3.800 0.800H5.200M0.800 3.800H5" stroke="#8fe070" stroke-width="0.8" fill="none"/><path d="M10 1.500H16M11 3.500H16M12 5.500H16" stroke="#b4b4b4" stroke-width="1"/></svg>
<span class="t" style="left:393px;top:419px;letter-spacing:-0.09px"><span style="color:#008000">put_natural_16</span><span style="letter-spacing:-0.05px"> <span style="color:#f00">(</span><span style="color:#000">i: </span></span><span style="color:#00f;letter-spacing:-0.158px">NATURAL_16</span><span style="color:#f00">)</span></span>
<svg class="i" style="left:375px;top:433px;" width="16" height="16" viewBox="0 0 16 16"><path transform="translate(0.5 5) scale(1.08)" d="M3 0H6V3H9V6H6V9H3V6H0V3H3Z" fill="#3fae2a" stroke="#1d6b12" stroke-width="0.9" stroke-linejoin="round"/><path transform="translate(0.5 5) scale(1.08)" d="M3.800 0.800H5.200M0.800 3.800H5" stroke="#8fe070" stroke-width="0.8" fill="none"/><path d="M10 1.500H16M11 3.500H16M12 5.500H16" stroke="#b4b4b4" stroke-width="1"/></svg>
<span class="t" style="left:393px;top:435px;letter-spacing:-0.09px"><span style="color:#008000">put_natural_32</span><span style="letter-spacing:-0.05px"> <span style="color:#f00">(</span><span style="color:#000">i: </span></span><span style="color:#00f;letter-spacing:-0.118px">NATURAL_32</span><span style="color:#f00">)</span></span>
<svg class="i" style="left:375px;top:449px;" width="16" height="16" viewBox="0 0 16 16"><path transform="translate(0.5 5) scale(1.08)" d="M3 0H6V3H9V6H6V9H3V6H0V3H3Z" fill="#3fae2a" stroke="#1d6b12" stroke-width="0.9" stroke-linejoin="round"/><path transform="translate(0.5 5) scale(1.08)" d="M3.800 0.800H5.200M0.800 3.800H5" stroke="#8fe070" stroke-width="0.8" fill="none"/><path d="M10 1.500H16M11 3.500H16M12 5.500H16" stroke="#b4b4b4" stroke-width="1"/></svg>
<span class="t" style="left:393px;top:451px;letter-spacing:-0.09px"><span style="color:#008000">put_natural_64</span><span style="letter-spacing:-0.05px"> <span style="color:#f00">(</span><span style="color:#000">i: </span></span><span style="color:#00f;letter-spacing:-0.118px">NATURAL_64</span><span style="color:#f00">)</span></span>
<svg class="i" style="left:375px;top:465px;" width="16" height="16" viewBox="0 0 16 16"><path transform="translate(0.5 5) scale(1.08)" d="M3 0H6V3H9V6H6V9H3V6H0V3H3Z" fill="#3fae2a" stroke="#1d6b12" stroke-width="0.9" stroke-linejoin="round"/><path transform="translate(0.5 5) scale(1.08)" d="M3.800 0.800H5.200M0.800 3.800H5" stroke="#8fe070" stroke-width="0.8" fill="none"/><path d="M10 1.500H16M11 3.500H16M12 5.500H16" stroke="#b4b4b4" stroke-width="1"/></svg>
<span class="t" style="left:393px;top:467px;letter-spacing:-0.09px"><span style="color:#008000">put_natural_8</span><span style="letter-spacing:-0.05px"> <span style="color:#f00">(</span><span style="color:#000">i: </span></span><span style="color:#00f;letter-spacing:-0.151px">NATURAL_8</span><span style="color:#f00">)</span></span>
<svg class="i" style="left:375px;top:481px;" width="16" height="16" viewBox="0 0 16 16"><path transform="translate(0.5 5) scale(1.08)" d="M3 0H6V3H9V6H6V9H3V6H0V3H3Z" fill="#3fae2a" stroke="#1d6b12" stroke-width="0.9" stroke-linejoin="round"/><path transform="translate(0.5 5) scale(1.08)" d="M3.800 0.800H5.200M0.800 3.800H5" stroke="#8fe070" stroke-width="0.8" fill="none"/><path d="M10 1.500H16M11 3.500H16M12 5.500H16" stroke="#b4b4b4" stroke-width="1"/></svg>
<span class="t" style="left:393px;top:483px;letter-spacing:-0.09px"><span style="color:#008000">put_new_line</span></span>
<svg class="i" style="left:375px;top:497px;" width="16" height="16" viewBox="0 0 16 16"><path transform="translate(0.5 5) scale(1.08)" d="M3 0H6V3H9V6H6V9H3V6H0V3H3Z" fill="#3fae2a" stroke="#1d6b12" stroke-width="0.9" stroke-linejoin="round"/><path transform="translate(0.5 5) scale(1.08)" d="M3.800 0.800H5.200M0.800 3.800H5" stroke="#8fe070" stroke-width="0.8" fill="none"/><path d="M10 1.500H16M11 3.500H16M12 5.500H16" stroke="#b4b4b4" stroke-width="1"/></svg>
<span class="t" style="left:393px;top:499px;letter-spacing:-0.09px"><span style="color:#008000">put_real</span><span style="letter-spacing:0.0px"> <span style="color:#f00">(</span><span style="color:#000">r: </span></span><span style="color:#00f;letter-spacing:-0.141px">REAL_32</span><span style="color:#f00">)</span></span>
<svg class="i" style="left:375px;top:513px;" width="16" height="16" viewBox="0 0 16 16"><path transform="translate(0.5 5) scale(1.08)" d="M3 0H6V3H9V6H6V9H3V6H0V3H3Z" fill="#3fae2a" stroke="#1d6b12" stroke-width="0.9" stroke-linejoin="round"/><path transform="translate(0.5 5) scale(1.08)" d="M3.800 0.800H5.200M0.800 3.800H5" stroke="#8fe070" stroke-width="0.8" fill="none"/><path d="M10 1.500H16M11 3.500H16M12 5.500H16" stroke="#b4b4b4" stroke-width="1"/></svg>
<span class="t" style="left:393px;top:515px;letter-spacing:-0.09px"><span style="color:#008000">put_string</span><span style="letter-spacing:0.33px"> <span style="color:#f00">(</span><span style="color:#000">s: </span></span><span style="color:#00f;letter-spacing:-0.599px">STRING_8</span><span style="color:#f00">)</span></span>
<svg class="i" style="left:375px;top:529px;" width="16" height="16" viewBox="0 0 16 16"><path transform="translate(0.5 5) scale(1.08)" d="M3 0H6V3H9V6H6V9H3V6H0V3H3Z" fill="#3fae2a" stroke="#1d6b12" stroke-width="0.9" stroke-linejoin="round"/><path transform="translate(0.5 5) scale(1.08)" d="M3.800 0.800H5.200M0.800 3.800H5" stroke="#8fe070" stroke-width="0.8" fill="none"/><path d="M10 1.500H16M11 3.500H16M12 5.500H16" stroke="#b4b4b4" stroke-width="1"/></svg>
<span class="t" style="left:393px;top:531px;letter-spacing:-0.09px"><span style="color:#008000">putbool</span><span style="letter-spacing:0.33px"> <span style="color:#f00">(</span><span style="color:#000">b: </span></span><span style="color:#00f;letter-spacing:-0.369px">BOOLEAN</span><span style="color:#f00">)</span></span>
<svg class="i" style="left:375px;top:545px;" width="16" height="16" viewBox="0 0 16 16"><path transform="translate(0.5 5) scale(1.08)" d="M3 0H6V3H9V6H6V9H3V6H0V3H3Z" fill="#3fae2a" stroke="#1d6b12" stroke-width="0.9" stroke-linejoin="round"/><path transform="translate(0.5 5) scale(1.08)" d="M3.800 0.800H5.200M0.800 3.800H5" stroke="#8fe070" stroke-width="0.8" fill="none"/><path d="M10 1.500H16M11 3.500H16M12 5.500H16" stroke="#b4b4b4" stroke-width="1"/></svg>
<span class="t" style="left:393px;top:547px;letter-spacing:-0.09px"><span style="color:#008000">putchar</span><span style="letter-spacing:0.33px"> <span style="color:#f00">(</span><span style="color:#000">c: </span></span><span style="color:#00f;letter-spacing:-0.517px">CHARACTER_8</span><span style="color:#f00">)</span></span>
<svg class="i" style="left:375px;top:561px;" width="16" height="16" viewBox="0 0 16 16"><path transform="translate(0.5 5) scale(1.08)" d="M3 0H6V3H9V6H6V9H3V6H0V3H3Z" fill="#3fae2a" stroke="#1d6b12" stroke-width="0.9" stroke-linejoin="round"/><path transform="translate(0.5 5) scale(1.08)" d="M3.800 0.800H5.200M0.800 3.800H5" stroke="#8fe070" stroke-width="0.8" fill="none"/><path d="M10 1.500H16M11 3.500H16M12 5.500H16" stroke="#b4b4b4" stroke-width="1"/></svg>
<span class="t" style="left:393px;top:563px;letter-spacing:-0.09px"><span style="color:#008000">putdouble</span><span style="letter-spacing:0.33px"> <span style="color:#f00">(</span><span style="color:#000">d: </span></span><span style="color:#00f;letter-spacing:-0.298px">REAL_64</span><span style="color:#f00">)</span></span>
<svg class="i" style="left:375px;top:577px;" width="16" height="16" viewBox="0 0 16 16"><path transform="translate(0.5 5) scale(1.08)" d="M3 0H6V3H9V6H6V9H3V6H0V3H3Z" fill="#3fae2a" stroke="#1d6b12" stroke-width="0.9" stroke-linejoin="round"/><path transform="translate(0.5 5) scale(1.08)" d="M3.800 0.800H5.200M0.800 3.800H5" stroke="#8fe070" stroke-width="0.8" fill="none"/><path d="M10 1.500H16M11 3.500H16M12 5.500H16" stroke="#b4b4b4" stroke-width="1"/></svg>
<span class="t" style="left:393px;top:579px;letter-spacing:-0.09px"><span style="color:#008000">putint</span><span style="letter-spacing:-0.05px"> <span style="color:#f00">(</span><span style="color:#000">i: </span></span><span style="color:#00f;letter-spacing:-0.625px">INTEGER_32</span><span style="color:#f00">)</span></span>
<svg class="i" style="left:375px;top:593px;" width="16" height="16" viewBox="0 0 16 16"><path transform="translate(0.5 5) scale(1.08)" d="M3 0H6V3H9V6H6V9H3V6H0V3H3Z" fill="#3fae2a" stroke="#1d6b12" stroke-width="0.9" stroke-linejoin="round"/><path transform="translate(0.5 5) scale(1.08)" d="M3.800 0.800H5.200M0.800 3.800H5" stroke="#8fe070" stroke-width="0.8" fill="none"/><path d="M10 1.500H16M11 3.500H16M12 5.500H16" stroke="#b4b4b4" stroke-width="1"/></svg>
<span class="t" style="left:393px;top:595px;letter-spacing:-0.09px"><span style="color:#008000">putreal</span><span style="letter-spacing:0.0px"> <span style="color:#f00">(</span><span style="color:#000">r: </span></span><span style="color:#00f;letter-spacing:-0.141px">REAL_32</span><span style="color:#f00">)</span></span>
<svg class="i" style="left:375px;top:609px;" width="16" height="16" viewBox="0 0 16 16"><path transform="translate(0.5 5) scale(1.08)" d="M3 0H6V3H9V6H6V9H3V6H0V3H3Z" fill="#3fae2a" stroke="#1d6b12" stroke-width="0.9" stroke-linejoin="round"/><path transform="translate(0.5 5) scale(1.08)" d="M3.800 0.800H5.200M0.800 3.800H5" stroke="#8fe070" stroke-width="0.8" fill="none"/><path d="M10 1.500H16M11 3.500H16M12 5.500H16" stroke="#b4b4b4" stroke-width="1"/></svg>
<span class="t" style="left:393px;top:611px;letter-spacing:-0.09px"><span style="color:#008000">putstring</span><span style="letter-spacing:0.33px"> <span style="color:#f00">(</span><span style="color:#000">s: </span></span><span style="color:#00f;letter-spacing:-0.599px">STRING_8</span><span style="color:#f00">)</span></span>
<span class="t" style="left:376px;top:632px;letter-spacing:-0.496px;">Options:</span>
<div style="left:427px;top:630px;width:16px;height:16px;border:1px solid #7f9db9;border-radius:3px;background:#fff"></div>
<svg class="i" style="left:427px;top:630px;" width="16" height="16" viewBox="0 0 16 16"><path d="M3.500 4H12.500L9 8V13H7V8Z" fill="#2a6ae8" stroke="#1a4ab8" stroke-width="0.8"/></svg>
<div style="left:444px;top:630px;width:16px;height:16px;border:1px solid #7f9db9;border-radius:3px;background:#fff"></div>
<svg class="i" style="left:444px;top:630px;" width="16" height="16" viewBox="0 0 16 16"><path d="M4 6H5.500M4 10H5.500" stroke="#223" stroke-width="1.600"/><path d="M8 4.500L11.500 8L8 11.500" fill="none" stroke="#223" stroke-width="1.400"/></svg>
<div style="left:461px;top:630px;width:16px;height:16px;border:1px solid #7f9db9;border-radius:3px;background:#fff"></div>
<svg class="i" style="left:461px;top:630px;" width="16" height="16" viewBox="0 0 16 16"><path transform="translate(-0.5 1)" d="M7.500 3H7Q5.800 3 5.800 4.200V6L4.600 7L5.800 8V9.800Q5.800 11 7 11H7.500M9.500 3H10Q11.200 3 11.200 4.200V6L12.400 7L11.200 8V9.800Q11.200 11 10 11H9.500" fill="none" stroke="#2a7a14" stroke-width="1.600"/></svg>
<svg class="i" style="left:478px;top:630px;" width="16" height="16" viewBox="0 0 16 16"><path d="M3 8H4.500M6 8H7.500" stroke="#223" stroke-width="1.600"/><path d="M9.500 4.500L13 8L9.500 11.500" fill="none" stroke="#223" stroke-width="1.400"/></svg>
<div style="left:495px;top:630px;width:16px;height:16px;border:1px solid #7f9db9;border-radius:3px;background:#fff"></div>
<svg class="i" style="left:495px;top:630px;" width="16" height="16" viewBox="0 0 16 16"><path d="M4 4L12 12" stroke="#2aa81a" stroke-width="2.200"/><path d="M3.500 9V3.500H9Z" fill="#2aa81a"/><path d="M12.500 7V12.500H7Z" fill="#2aa81a"/></svg>
</body></html>
